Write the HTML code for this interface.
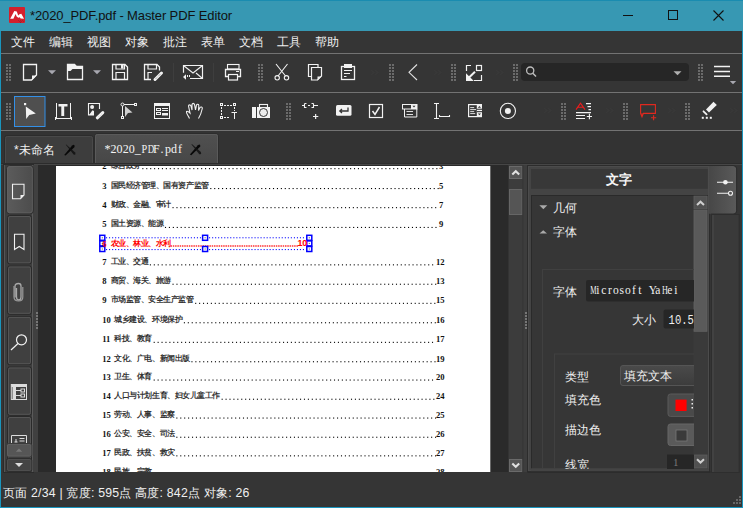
<!DOCTYPE html>
<html><head><meta charset="utf-8">
<style>
*{margin:0;padding:0;box-sizing:border-box}
html,body{width:743px;height:508px;overflow:hidden;background:#353535;font-family:"Liberation Sans",sans-serif;color:#e8e8e8}
.a{position:absolute;white-space:nowrap}
.hl{height:1px;background:#737373}
.menu span{position:absolute;top:34px;font-size:12px;color:#f0f0f0}
</style></head><body>
<div class="a" style="left:0;top:0;width:743px;height:508px;background:#353535;border-left:1px solid #1a95bd;border-right:1px solid #1a95bd;border-bottom:1px solid #1a95bd"></div>
<div class="a" style="left:0;top:0;width:743px;height:31px;background:#3798b3;border-top:1px solid #1a8cb0"></div>
<div class="a" style="left:30px;top:8px;font-size:13px;letter-spacing:-0.12px;color:#111">*2020_PDF.pdf - Master PDF Editor</div>
<div class="menu">
<span style="left:11px">文件</span><span style="left:49px">编辑</span><span style="left:87px">视图</span><span style="left:125px">对象</span><span style="left:163px">批注</span><span style="left:201px">表单</span><span style="left:239px">文档</span><span style="left:277px">工具</span><span style="left:315px">帮助</span>
</div>
<div class="a hl" style="left:1px;top:53px;width:741px"></div>
<div class="a hl" style="left:1px;top:92px;width:741px"></div>
<div class="a hl" style="left:1px;top:130px;width:741px"></div>

<svg class="a" style="left:0;top:0" width="743" height="508" viewBox="0 0 743 508">
<rect x="9" y="7" width="16" height="16" rx="1" fill="#d4202c"/>
<path d="M10.2 18.7L14.3 11.1L16.8 11.4L18.2 15.6L19.5 14.2L21.3 13.8L24 18.7L20.6 18.6L19.8 17.2L18.3 17.8L16.6 16.6L15.6 14L13.4 18.7Z" fill="#fff"/><path d="M18.5 20.5l1 1M20.5 20.5l1 1M22.5 20.5l1 1M20 22l1 .5" stroke="#7a1a30" stroke-width="0.8"/>
<rect x="623" y="15" width="10" height="1" fill="#111"/>
<rect x="668.5" y="10.5" width="9" height="9" fill="none" stroke="#111" stroke-width="1"/>
<path d="M713.5 10.5L723.5 20.5M723.5 10.5L713.5 20.5" stroke="#111" stroke-width="1.1"/>
<rect x="6" y="64" width="2" height="2" fill="#6b6b6b"/><rect x="9" y="64" width="2" height="2" fill="#6b6b6b"/><rect x="6" y="67" width="2" height="2" fill="#6b6b6b"/><rect x="9" y="67" width="2" height="2" fill="#6b6b6b"/><rect x="6" y="70" width="2" height="2" fill="#6b6b6b"/><rect x="9" y="70" width="2" height="2" fill="#6b6b6b"/><rect x="6" y="73" width="2" height="2" fill="#6b6b6b"/><rect x="9" y="73" width="2" height="2" fill="#6b6b6b"/><rect x="6" y="76" width="2" height="2" fill="#6b6b6b"/><rect x="9" y="76" width="2" height="2" fill="#6b6b6b"/><rect x="6" y="79" width="2" height="2" fill="#6b6b6b"/><rect x="9" y="79" width="2" height="2" fill="#6b6b6b"/>
<path d="M23.5 64.5H36.5V75L31.5 80H23.5Z" fill="none" stroke="#f2f2f2" stroke-width="1.3"/>
<path d="M32 75.5H36.5L32 80Z" fill="#f2f2f2"/>
<path d="M48 70.3H56L52 74.3Z" fill="#a8a8b0"/>
<path d="M67.5 64.5H74.5L76.5 66.5H82.5V79.5H67.5Z" fill="none" stroke="#f2f2f2" stroke-width="1.3"/>
<path d="M67.5 64.5H74.5L76.5 66.5H82.5V69H72.5L70.5 71H67.5Z" fill="#f2f2f2"/>
<path d="M93 70.3H101L97 74.3Z" fill="#a8a8b0"/>
<path d="M112.5 64.5H125L127.5 67V79.5H112.5Z" fill="none" stroke="#f2f2f2" stroke-width="1.3"/>
<path d="M116 64.5V69H124.5V64.5M116 79.5V72.5H124.5V79.5" fill="none" stroke="#f2f2f2" stroke-width="1.2"/>
<rect x="121" y="65" width="2.5" height="3.5" fill="#f2f2f2"/>
<path d="M151 79.5H144.5V64.5H157L159.5 67V70.5" fill="none" stroke="#f2f2f2" stroke-width="1.3"/>
<path d="M148 64.5V69H156.5V64.5M148 79.5V72.5H152" fill="none" stroke="#f2f2f2" stroke-width="1.2"/>
<rect x="152.5" y="67" width="3" height="3" fill="none"/>
<path d="M155 79.5L161.5 73" stroke="#f2f2f2" stroke-width="3" stroke-linecap="round"/>
<path d="M155.6 78.9L160.9 73.6" stroke="#888" stroke-width="1" stroke-dasharray="1 1"/>
<rect x="173" y="63" width="1" height="19" fill="#3e3e3e"/>
<rect x="213" y="63" width="1" height="19" fill="#3e3e3e"/>
<path d="M183.5 72.7V65.5H202.5V78.5H190" fill="none" stroke="#f2f2f2" stroke-width="1.2"/>
<path d="M183.5 65.5L193 73L202.5 65.5M202.5 78.5L196 73" fill="none" stroke="#f2f2f2" stroke-width="1.1"/>
<path d="M183 77L186 74.2V79.8Z" fill="#f2f2f2"/><rect x="187" y="75" width="1" height="2" fill="#f2f2f2"/><rect x="189" y="75" width="1" height="2" fill="#f2f2f2"/>
<rect x="227.5" y="64.5" width="11.5" height="4.5" fill="none" stroke="#f2f2f2" stroke-width="1.1"/>
<path d="M228.5 76.5H225.5V69.5H240.5V76.5H237.5" fill="none" stroke="#f2f2f2" stroke-width="1.3"/>
<rect x="228.5" y="74.5" width="9" height="5.5" fill="none" stroke="#f2f2f2" stroke-width="1.2"/>
<rect x="236" y="71" width="3" height="1" fill="#f2f2f2"/>
<rect x="258" y="64" width="2" height="2" fill="#6b6b6b"/><rect x="261" y="64" width="2" height="2" fill="#6b6b6b"/><rect x="258" y="67" width="2" height="2" fill="#6b6b6b"/><rect x="261" y="67" width="2" height="2" fill="#6b6b6b"/><rect x="258" y="70" width="2" height="2" fill="#6b6b6b"/><rect x="261" y="70" width="2" height="2" fill="#6b6b6b"/><rect x="258" y="73" width="2" height="2" fill="#6b6b6b"/><rect x="261" y="73" width="2" height="2" fill="#6b6b6b"/><rect x="258" y="76" width="2" height="2" fill="#6b6b6b"/><rect x="261" y="76" width="2" height="2" fill="#6b6b6b"/><rect x="258" y="79" width="2" height="2" fill="#6b6b6b"/><rect x="261" y="79" width="2" height="2" fill="#6b6b6b"/>
<path d="M276 64L285.5 76M287.5 64L278 76" stroke="#f2f2f2" stroke-width="1.1"/>
<circle cx="277.2" cy="77.8" r="2.2" fill="none" stroke="#f2f2f2" stroke-width="1.1"/><circle cx="286.5" cy="77.8" r="2.2" fill="none" stroke="#f2f2f2" stroke-width="1.1"/>
<path d="M311 76.5H308.5V64.5H318V67" fill="none" stroke="#f2f2f2" stroke-width="1.2"/>
<path d="M311.5 67.5H321.5V76L317.5 80H311.5Z" fill="none" stroke="#f2f2f2" stroke-width="1.2"/>
<path d="M317.5 76.5H321.5L317.5 80.5Z" fill="#f2f2f2"/>
<rect x="341.5" y="66.5" width="13" height="13" fill="none" stroke="#f2f2f2" stroke-width="1.3"/>
<rect x="344" y="64" width="8" height="4" fill="#f2f2f2"/>
<path d="M344 70.5H352M344 73.5H350M344 76.5H346.5" stroke="#f2f2f2" stroke-width="1"/>
<path d="M371 70l3 2.5l-3 2.5M375 70l3 2.5l-3 2.5" stroke="#393939" stroke-width="1.2" fill="none"/>
<rect x="389" y="64" width="2" height="2" fill="#6b6b6b"/><rect x="392" y="64" width="2" height="2" fill="#6b6b6b"/><rect x="389" y="67" width="2" height="2" fill="#6b6b6b"/><rect x="392" y="67" width="2" height="2" fill="#6b6b6b"/><rect x="389" y="70" width="2" height="2" fill="#6b6b6b"/><rect x="392" y="70" width="2" height="2" fill="#6b6b6b"/><rect x="389" y="73" width="2" height="2" fill="#6b6b6b"/><rect x="392" y="73" width="2" height="2" fill="#6b6b6b"/><rect x="389" y="76" width="2" height="2" fill="#6b6b6b"/><rect x="392" y="76" width="2" height="2" fill="#6b6b6b"/><rect x="389" y="79" width="2" height="2" fill="#6b6b6b"/><rect x="392" y="79" width="2" height="2" fill="#6b6b6b"/>
<path d="M417 64.5L409 72.3L417 80" fill="none" stroke="#e0e0e0" stroke-width="1.1"/>
<path d="M434 70l3 2.5l-3 2.5M438 70l3 2.5l-3 2.5" stroke="#393939" stroke-width="1.2" fill="none"/>
<rect x="451" y="64" width="2" height="2" fill="#6b6b6b"/><rect x="454" y="64" width="2" height="2" fill="#6b6b6b"/><rect x="451" y="67" width="2" height="2" fill="#6b6b6b"/><rect x="454" y="67" width="2" height="2" fill="#6b6b6b"/><rect x="451" y="70" width="2" height="2" fill="#6b6b6b"/><rect x="454" y="70" width="2" height="2" fill="#6b6b6b"/><rect x="451" y="73" width="2" height="2" fill="#6b6b6b"/><rect x="454" y="73" width="2" height="2" fill="#6b6b6b"/><rect x="451" y="76" width="2" height="2" fill="#6b6b6b"/><rect x="454" y="76" width="2" height="2" fill="#6b6b6b"/><rect x="451" y="79" width="2" height="2" fill="#6b6b6b"/><rect x="454" y="79" width="2" height="2" fill="#6b6b6b"/>
<path d="M466.5 71V65.5H471M481.5 75V80.5H474" fill="none" stroke="#f2f2f2" stroke-width="1.2"/>
<rect x="476.5" y="65.5" width="5" height="5" fill="none" stroke="#f2f2f2" stroke-width="1.2"/>
<path d="M466 73.2L466 81L473.8 81Z" fill="#f2f2f2"/><path d="M468.5 78L475 71.8" stroke="#f2f2f2" stroke-width="2"/>
<path d="M496 70l3 2.5l-3 2.5M500 70l3 2.5l-3 2.5" stroke="#393939" stroke-width="1.2" fill="none"/>
<rect x="513" y="64" width="2" height="2" fill="#6b6b6b"/><rect x="516" y="64" width="2" height="2" fill="#6b6b6b"/><rect x="513" y="67" width="2" height="2" fill="#6b6b6b"/><rect x="516" y="67" width="2" height="2" fill="#6b6b6b"/><rect x="513" y="70" width="2" height="2" fill="#6b6b6b"/><rect x="516" y="70" width="2" height="2" fill="#6b6b6b"/><rect x="513" y="73" width="2" height="2" fill="#6b6b6b"/><rect x="516" y="73" width="2" height="2" fill="#6b6b6b"/><rect x="513" y="76" width="2" height="2" fill="#6b6b6b"/><rect x="516" y="76" width="2" height="2" fill="#6b6b6b"/><rect x="513" y="79" width="2" height="2" fill="#6b6b6b"/><rect x="516" y="79" width="2" height="2" fill="#6b6b6b"/>
<rect x="521" y="63" width="168" height="18" rx="4" fill="#262626"/>
<circle cx="530.2" cy="70.6" r="3.6" fill="none" stroke="#bdbdbd" stroke-width="1.3"/><path d="M532.8 73.2L536 76.5" stroke="#bdbdbd" stroke-width="1.5"/>
<path d="M673.5 71.2H681.5L677.5 75.3Z" fill="#b0b0b0"/>
<rect x="698" y="64" width="2" height="2" fill="#6b6b6b"/><rect x="701" y="64" width="2" height="2" fill="#6b6b6b"/><rect x="698" y="67" width="2" height="2" fill="#6b6b6b"/><rect x="701" y="67" width="2" height="2" fill="#6b6b6b"/><rect x="698" y="70" width="2" height="2" fill="#6b6b6b"/><rect x="701" y="70" width="2" height="2" fill="#6b6b6b"/><rect x="698" y="73" width="2" height="2" fill="#6b6b6b"/><rect x="701" y="73" width="2" height="2" fill="#6b6b6b"/><rect x="698" y="76" width="2" height="2" fill="#6b6b6b"/><rect x="701" y="76" width="2" height="2" fill="#6b6b6b"/><rect x="698" y="79" width="2" height="2" fill="#6b6b6b"/><rect x="701" y="79" width="2" height="2" fill="#6b6b6b"/>
<path d="M714 66.5H730M714 71.5H730M714 76.3H730" stroke="#f2f2f2" stroke-width="1.4"/>
<path d="M729.8 81H736.2L733 84.3Z" fill="#a8a8b0"/>
<rect x="6" y="103" width="2" height="2" fill="#6b6b6b"/><rect x="9" y="103" width="2" height="2" fill="#6b6b6b"/><rect x="6" y="106" width="2" height="2" fill="#6b6b6b"/><rect x="9" y="106" width="2" height="2" fill="#6b6b6b"/><rect x="6" y="109" width="2" height="2" fill="#6b6b6b"/><rect x="9" y="109" width="2" height="2" fill="#6b6b6b"/><rect x="6" y="112" width="2" height="2" fill="#6b6b6b"/><rect x="9" y="112" width="2" height="2" fill="#6b6b6b"/><rect x="6" y="115" width="2" height="2" fill="#6b6b6b"/><rect x="9" y="115" width="2" height="2" fill="#6b6b6b"/><rect x="6" y="118" width="2" height="2" fill="#6b6b6b"/><rect x="9" y="118" width="2" height="2" fill="#6b6b6b"/>
<rect x="14.5" y="96.5" width="30.5" height="30" fill="#4f4f4f" stroke="#3390e8" stroke-width="1"/>
<rect x="24" y="103" width="2.2" height="2.2" fill="#f2f2f2"/>
<path d="M25.8 106.5L35.8 113.5L29.2 115L26.2 119Z" fill="#f2f2f2"/>
<path d="M56.5 103V119M70.5 103V119M55 118.5H72" stroke="#f2f2f2" stroke-width="1"/><path d="M55.5 117V120M71.5 117V120" stroke="#f2f2f2" stroke-width="1"/>
<path d="M58.5 104H67.5V106.5H64.2V116H61.3V106.5H58.5Z" fill="#f2f2f2"/>
<path d="M99.5 109V103.5H88.5V115H94" fill="none" stroke="#f2f2f2" stroke-width="1.1"/>
<circle cx="92.1" cy="106.9" r="2" fill="#f2f2f2"/><path d="M89 115L92.5 110.3L94 111V115Z" fill="#f2f2f2"/>
<path d="M97.3 117.8L102.8 112.6" stroke="#f2f2f2" stroke-width="3" stroke-linecap="round"/>
<path d="M98.4 116.2l.8.8M99.8 114.9l.8.8M101.2 113.6l.8.8" stroke="#bbb" stroke-width="0.6"/>
<path d="M122.5 104.5H135.5M122.5 104.5V117.5" stroke="#f2f2f2" stroke-width="1"/>
<circle cx="122.5" cy="104.5" r="1.5" fill="#353535" stroke="#f2f2f2" stroke-width="1"/>
<rect x="134.5" y="103.5" width="2" height="2" fill="#353535" stroke="#f2f2f2" stroke-width="1"/>
<rect x="121.5" y="116.5" width="2" height="2" fill="#353535" stroke="#f2f2f2" stroke-width="1"/>
<path d="M125 106L132.5 112.5L128 113L125 117Z" fill="#d0d0d0"/>
<rect x="154.5" y="103.5" width="15" height="15" fill="none" stroke="#f2f2f2" stroke-width="1"/>
<rect x="154" y="103" width="16" height="3" fill="#f2f2f2"/>
<rect x="156.5" y="108.5" width="4" height="2" fill="none" stroke="#f2f2f2" stroke-width="1"/><rect x="156.5" y="112.5" width="4" height="2" fill="none" stroke="#f2f2f2" stroke-width="1"/>
<path d="M162 108.5H168M162 110.5H168M162 113.5H168" stroke="#f2f2f2" stroke-width="1"/><rect x="162" y="114" width="6" height="1.5" fill="#f2f2f2"/>
<path d="M189.5 118.5C188 115 186 113.5 186.5 111.5C187.5 110.5 189 112 190 113L188.5 106C188.5 104.5 190.5 104.5 191 106L192 110L192 104.5C192.5 103 194 103 194.5 104.5L195.5 110L196.5 105C197 103.8 198.8 104 198.8 105.5L198.5 110.5L200 107.5C200.8 106.5 202.5 107 202.3 108.5C201.5 112 200.5 115.5 198.5 118.5" fill="none" stroke="#f2f2f2" stroke-width="1.1"/>
<rect x="220.5" y="103.5" width="2" height="2" fill="none" stroke="#f2f2f2" stroke-width="1"/><rect x="233.5" y="103.5" width="2" height="2" fill="none" stroke="#f2f2f2" stroke-width="1"/><rect x="220.5" y="116.5" width="2" height="2" fill="none" stroke="#f2f2f2" stroke-width="1"/>
<path d="M224 105.5H233M221.5 107V116M224 117.5H229M234.5 107V111" stroke="#f2f2f2" stroke-width="1" stroke-dasharray="2 1"/>
<path d="M231.5 112.5H237M234.5 112.5V119" stroke="#f2f2f2" stroke-width="1"/>
<rect x="252" y="107" width="4" height="11" fill="#f2f2f2"/><rect x="257" y="107" width="13" height="11" fill="#f2f2f2"/>
<rect x="259.5" y="104.5" width="8" height="3" fill="none" stroke="#f2f2f2" stroke-width="1.1"/>
<circle cx="263.5" cy="112.5" r="4" fill="#ececec" stroke="#353535" stroke-width="1"/>
<rect x="286" y="103" width="2" height="2" fill="#6b6b6b"/><rect x="289" y="103" width="2" height="2" fill="#6b6b6b"/><rect x="286" y="106" width="2" height="2" fill="#6b6b6b"/><rect x="289" y="106" width="2" height="2" fill="#6b6b6b"/><rect x="286" y="109" width="2" height="2" fill="#6b6b6b"/><rect x="289" y="109" width="2" height="2" fill="#6b6b6b"/><rect x="286" y="112" width="2" height="2" fill="#6b6b6b"/><rect x="289" y="112" width="2" height="2" fill="#6b6b6b"/><rect x="286" y="115" width="2" height="2" fill="#6b6b6b"/><rect x="289" y="115" width="2" height="2" fill="#6b6b6b"/><rect x="286" y="118" width="2" height="2" fill="#6b6b6b"/><rect x="289" y="118" width="2" height="2" fill="#6b6b6b"/>
<path d="M302 105.5H304.5M304.5 103.5V107.5H306.5M304.5 103.5H306.5M308 105.5H310M313.5 103.5V107.5H311.5M313.5 103.5H311.5M313.5 105.5H318" fill="none" stroke="#f2f2f2" stroke-width="1.1"/>
<path d="M313 116.5H318.3M315.65 114V119" stroke="#f2f2f2" stroke-width="1.2"/>
<rect x="336" y="105" width="15.5" height="10.8" rx="1.5" fill="#f2f2f2"/>
<path d="M348 107.5V111H340M342 109L339.8 111L342 113" fill="none" stroke="#353535" stroke-width="1.3"/>
<rect x="369.5" y="104.5" width="13" height="13" fill="none" stroke="#f2f2f2" stroke-width="1.2"/>
<path d="M372.5 111L375 114.5L379.5 107" fill="none" stroke="#f2f2f2" stroke-width="1.5"/>
<rect x="402.5" y="104.5" width="14.5" height="4.5" fill="none" stroke="#f2f2f2" stroke-width="1"/><rect x="411" y="104.5" width="6" height="4.5" fill="#f2f2f2"/>
<path d="M412.5 105.8H415.5L414 107.5Z" fill="#353535"/>
<path d="M404.5 109V117H416.8V109" fill="none" stroke="#f2f2f2" stroke-width="1"/><path d="M406.5 111.5H413M406.5 114.5H413" stroke="#f2f2f2" stroke-width="0.9"/>
<path d="M436.5 103.5V118.5M434 103.5H439M434 118.5H439" stroke="#f2f2f2" stroke-width="1.1"/>
<path d="M439.5 115V116.5H449.5V115" fill="none" stroke="#f2f2f2" stroke-width="1.1"/>
<rect x="468" y="104" width="14" height="13.2" fill="#f2f2f2"/><rect x="469.2" y="105.2" width="7.6" height="10.8" fill="#353535"/>
<path d="M470.2 107.6H474.2M470.2 109.6H476M470.2 111.6H474.2M470.2 113.6H475.2" stroke="#f2f2f2" stroke-width="0.9"/>
<rect x="476.8" y="108.7" width="5.2" height="1.1" fill="#353535"/><rect x="476.8" y="111.1" width="5.2" height="1.1" fill="#353535"/>
<path d="M477.8 107.8H481L479.4 105.9Z M477.8 113.4H481L479.4 115.3Z" fill="#353535"/>
<circle cx="507.9" cy="110.9" r="7.6" fill="none" stroke="#f2f2f2" stroke-width="1.1"/><circle cx="507.9" cy="110.9" r="3" fill="#f2f2f2"/>
<path d="M544 108l3 2.5l-3 2.5M548 108l3 2.5l-3 2.5" stroke="#393939" stroke-width="1.2" fill="none"/>
<rect x="561" y="103" width="2" height="2" fill="#6b6b6b"/><rect x="564" y="103" width="2" height="2" fill="#6b6b6b"/><rect x="561" y="106" width="2" height="2" fill="#6b6b6b"/><rect x="564" y="106" width="2" height="2" fill="#6b6b6b"/><rect x="561" y="109" width="2" height="2" fill="#6b6b6b"/><rect x="564" y="109" width="2" height="2" fill="#6b6b6b"/><rect x="561" y="112" width="2" height="2" fill="#6b6b6b"/><rect x="564" y="112" width="2" height="2" fill="#6b6b6b"/><rect x="561" y="115" width="2" height="2" fill="#6b6b6b"/><rect x="564" y="115" width="2" height="2" fill="#6b6b6b"/><rect x="561" y="118" width="2" height="2" fill="#6b6b6b"/><rect x="564" y="118" width="2" height="2" fill="#6b6b6b"/>
<path d="M576 109.6L580.5 103.2L585 109.6M577.6 107.3H583.4" fill="none" stroke="#ee1c1c" stroke-width="1.1"/>
<path d="M586 103.6H591M587.5 106.6H591M588.5 109.6H591M576 112.6H591M576 115.5H585M576 118.5H585M586.8 116.5H592M589.4 113.8V119.2" stroke="#f2f2f2" stroke-width="1.1"/>
<path d="M606 108l3 2.5l-3 2.5M610 108l3 2.5l-3 2.5" stroke="#393939" stroke-width="1.2" fill="none"/>
<rect x="623" y="103" width="2" height="2" fill="#6b6b6b"/><rect x="626" y="103" width="2" height="2" fill="#6b6b6b"/><rect x="623" y="106" width="2" height="2" fill="#6b6b6b"/><rect x="626" y="106" width="2" height="2" fill="#6b6b6b"/><rect x="623" y="109" width="2" height="2" fill="#6b6b6b"/><rect x="626" y="109" width="2" height="2" fill="#6b6b6b"/><rect x="623" y="112" width="2" height="2" fill="#6b6b6b"/><rect x="626" y="112" width="2" height="2" fill="#6b6b6b"/><rect x="623" y="115" width="2" height="2" fill="#6b6b6b"/><rect x="626" y="115" width="2" height="2" fill="#6b6b6b"/><rect x="623" y="118" width="2" height="2" fill="#6b6b6b"/><rect x="626" y="118" width="2" height="2" fill="#6b6b6b"/>
<path d="M640.6 104.6H655.4V113.4H643.4L642 116.8L640.6 113.4Z" fill="none" stroke="#e0291f" stroke-width="1.1"/><path d="M641 113.5L642 116.5L643 113.5Z" fill="#e0291f"/>
<path d="M651 117.8H656.2M653.6 115.3V120.2" stroke="#e0291f" stroke-width="1.1"/>
<path d="M668 108l3 2.5l-3 2.5M672 108l3 2.5l-3 2.5" stroke="#393939" stroke-width="1.2" fill="none"/>
<rect x="685" y="103" width="2" height="2" fill="#6b6b6b"/><rect x="688" y="103" width="2" height="2" fill="#6b6b6b"/><rect x="685" y="106" width="2" height="2" fill="#6b6b6b"/><rect x="688" y="106" width="2" height="2" fill="#6b6b6b"/><rect x="685" y="109" width="2" height="2" fill="#6b6b6b"/><rect x="688" y="109" width="2" height="2" fill="#6b6b6b"/><rect x="685" y="112" width="2" height="2" fill="#6b6b6b"/><rect x="688" y="112" width="2" height="2" fill="#6b6b6b"/><rect x="685" y="115" width="2" height="2" fill="#6b6b6b"/><rect x="688" y="115" width="2" height="2" fill="#6b6b6b"/><rect x="685" y="118" width="2" height="2" fill="#6b6b6b"/><rect x="688" y="118" width="2" height="2" fill="#6b6b6b"/>
<path d="M706 109.5L713.5 101.8L716.8 105L709 112.5Z" fill="#f2f2f2"/>
<path d="M703.5 111.3L706.6 114.4" stroke="#f2f2f2" stroke-width="1.8" stroke-linecap="round"/>
<rect x="701.8" y="116.8" width="2" height="2" fill="#f2f2f2"/><rect x="705.8" y="116.8" width="2" height="2" fill="#f2f2f2"/><rect x="709.8" y="116.8" width="2" height="2" fill="#f2f2f2"/>
<path d="M730 108l3 2.5l-3 2.5M734 108l3 2.5l-3 2.5" stroke="#393939" stroke-width="1.2" fill="none"/>
<rect x="1" y="131" width="741" height="33" fill="#333333"/>
<path d="M4.5 164V138Q4.5 135.5 7 135.5H91Q93.5 135.5 93.5 138V164" fill="#3d3d3d" stroke="#2c2c2c" stroke-width="1"/>
<path d="M5.5 164V138.5Q5.5 136.5 7.5 136.5H90.5Q92.5 136.5 92.5 138.5V164" fill="none" stroke="#494949" stroke-width="1"/>
<defs><linearGradient id="tg2" x1="0" y1="0" x2="0" y2="1"><stop offset="0" stop-color="#505050"/><stop offset="1" stop-color="#474747"/></linearGradient><linearGradient id="sbh" x1="0" y1="0" x2="1" y2="0"><stop offset="0" stop-color="#5c5c5c"/><stop offset="1" stop-color="#4c4c4c"/></linearGradient><linearGradient id="vt" x1="0" y1="0" x2="1" y2="0"><stop offset="0" stop-color="#474747"/><stop offset="1" stop-color="#5a5a5a"/></linearGradient><linearGradient id="cb" x1="0" y1="0" x2="0" y2="1"><stop offset="0" stop-color="#4a4a4a"/><stop offset="1" stop-color="#3c3c3c"/></linearGradient></defs>
<path d="M94.5 164V136Q94.5 133.5 97 133.5H216Q218.5 133.5 218.5 136V164" fill="url(#tg2)" stroke="#2c2c2c" stroke-width="1"/>
<path d="M95.5 164V136.5Q95.5 134.5 97.5 134.5H215.5Q217.5 134.5 217.5 136.5V164" fill="none" stroke="#5a5a5a" stroke-width="1"/>
<path d="M64.2 155L72.2 145.6Q74.8 143.6 74.60000000000001 147L65.60000000000001 155.6Z" fill="#080808"/><path d="M66.2 144.4L75.2 152.4Q76.4 155.4 73.60000000000001 154.6L65.8 144.8Z" fill="#111" opacity="0.85"/>
<path d="M189.9 154.6L197.9 145.2Q200.5 143.2 200.3 146.6L191.3 155.2Z" fill="#080808"/><path d="M191.9 144.0L200.9 152.0Q202.1 155.0 199.3 154.2L191.5 144.4Z" fill="#111" opacity="0.85"/>
<rect x="1" y="163" width="741" height="1" fill="#2c2c2c"/><rect x="1" y="164" width="741" height="1" fill="#464646"/>
<rect x="1" y="165" width="741" height="308" fill="#353535"/>
<rect x="3.5" y="164.5" width="30" height="308" fill="#3d3d3d" stroke="#2b2b2b"/><rect x="4" y="165" width="1" height="307" fill="#555"/>
<rect x="32" y="165" width="1" height="307" fill="#5a5a5a"/>
<rect x="33" y="165" width="5" height="307" fill="#404040"/>
<rect x="36" y="312" width="2" height="2" fill="#767676"/>
<rect x="36" y="315" width="2" height="2" fill="#767676"/>
<rect x="36" y="318" width="2" height="2" fill="#767676"/>
<rect x="36" y="321" width="2" height="2" fill="#767676"/>
<rect x="36" y="324" width="2" height="2" fill="#767676"/>
<rect x="36" y="327" width="2" height="2" fill="#767676"/>
<rect x="6.5" y="165.5" width="26.8" height="48.3" rx="3" fill="url(#sbh)" stroke="#2e2e2e"/>
<rect x="7.5" y="166.5" width="24.8" height="46.3" rx="2.5" fill="none" stroke="#626262" stroke-width="0.8"/>
<rect x="7.5" y="215.5" width="24" height="48.3" rx="2" fill="#404040" stroke="#2a2a2a"/>
<rect x="8.5" y="216.5" width="22" height="46.3" rx="1.5" fill="none" stroke="#555555" stroke-width="1"/>
<rect x="7.5" y="266" width="24" height="48.3" rx="2" fill="#404040" stroke="#2a2a2a"/>
<rect x="8.5" y="267" width="22" height="46.3" rx="1.5" fill="none" stroke="#555555" stroke-width="1"/>
<rect x="7.5" y="316.4" width="24" height="48.3" rx="2" fill="#404040" stroke="#2a2a2a"/>
<rect x="8.5" y="317.4" width="22" height="46.3" rx="1.5" fill="none" stroke="#555555" stroke-width="1"/>
<rect x="7.5" y="367" width="24" height="48.3" rx="2" fill="#404040" stroke="#2a2a2a"/>
<rect x="8.5" y="368" width="22" height="46.3" rx="1.5" fill="none" stroke="#555555" stroke-width="1"/>
<rect x="7.5" y="416.5" width="24" height="48.3" rx="2" fill="#404040" stroke="#2a2a2a"/>
<rect x="8.5" y="417.5" width="22" height="46.3" rx="1.5" fill="none" stroke="#555555" stroke-width="1"/>
<path d="M12.5 184.2H24V195L20.5 198.8H12.5Z" fill="none" stroke="#f2f2f2" stroke-width="1.1"/><path d="M20.5 195H24L20.5 198.8Z" fill="#f2f2f2"/>
<path d="M14.5 234.2H24V249.5L19.25 246.5L14.5 249.5Z" fill="none" stroke="#f2f2f2" stroke-width="1.1"/>
<path d="M16.5 288V297Q16.5 300 18.7 300Q21 300 21 297V286Q21 283.5 18.5 283.5Q15 283.5 15 286.5V297.5" fill="none" stroke="#a8a8a8" stroke-width="1.3"/><path d="M22.8 287V297Q22.8 301 18.7 301Q14 301 14 297V286" fill="none" stroke="#9a9a9a" stroke-width="1.2"/>
<circle cx="21.5" cy="339.8" r="5" fill="none" stroke="#f2f2f2" stroke-width="1.2"/><path d="M18 343.5L11 350" stroke="#f2f2f2" stroke-width="1.2"/>
<rect x="11.3" y="384.5" width="15.2" height="15" fill="none" stroke="#dcdcdc" stroke-width="1"/><rect x="11.3" y="384.5" width="15.2" height="2.5" fill="#dcdcdc"/><rect x="12.5" y="387" width="3.5" height="12" fill="#dcdcdc"/><path d="M16 390.5H21M16 395.5H21" stroke="#dcdcdc"/><rect x="21" y="389" width="3.5" height="3" fill="none" stroke="#dcdcdc" stroke-width="1"/><rect x="21" y="394" width="3.5" height="3" fill="none" stroke="#dcdcdc" stroke-width="1"/>
<path d="M11.5 443V435.5H26.5V443" fill="none" stroke="#dcdcdc" stroke-width="1"/><path d="M16 442V439M14.5 442H17.5M19.5 438.5H24.5M19.5 441H24.5" stroke="#dcdcdc" stroke-width="1"/>
<rect x="6.5" y="443.5" width="25.3" height="13.5" rx="2" fill="#565656" stroke="#3a3a3a"/><rect x="7.5" y="444.5" width="23.3" height="11.5" rx="1.5" fill="none" stroke="#626262" stroke-width="0.8"/>
<path d="M15.8 451.7H22.2L19 448.5Z" fill="#777"/>
<rect x="6.5" y="458.5" width="25.3" height="13" rx="2" fill="#444" stroke="#2e2e2e"/><rect x="7.5" y="459.5" width="23.3" height="11" rx="1.5" fill="none" stroke="#505050" stroke-width="0.8"/>
<path d="M15 463H23L19 467Z" fill="#ddd"/>
<rect x="38" y="165" width="470.6" height="307" fill="#2a2a2a"/>
<rect x="56" y="166" width="434.3" height="306" fill="#ffffff"/>
<rect x="508.6" y="165" width="14" height="307" fill="#3c3c3c"/>
<rect x="509.5" y="166.5" width="12.5" height="12" fill="#555" stroke="#6a6a6a" stroke-width="1"/>
<path d="M512.3 174.5L515.75 171.2L519.2 174.5" fill="none" stroke="#e0e0e0" stroke-width="2.1"/>
<rect x="509.5" y="189.5" width="12.5" height="25" fill="#555" stroke="#666" stroke-width="1"/>
<rect x="509.5" y="459.5" width="12.5" height="12" fill="#555" stroke="#6a6a6a" stroke-width="1"/>
<path d="M512.3 463.5L515.75 466.8L519.2 463.5" fill="none" stroke="#e0e0e0" stroke-width="2.1"/>
<rect x="522.6" y="165" width="5" height="307" fill="#3d3d3d"/><rect x="522.6" y="165" width="0.8" height="307" fill="#363636"/>
<rect x="525" y="312" width="2" height="2" fill="#767676"/>
<rect x="525" y="315" width="2" height="2" fill="#767676"/>
<rect x="525" y="318" width="2" height="2" fill="#767676"/>
<rect x="525" y="321" width="2" height="2" fill="#767676"/>
<rect x="525" y="324" width="2" height="2" fill="#767676"/>
<rect x="525" y="327" width="2" height="2" fill="#767676"/>
<rect x="142.30" y="168.10" width="1.1" height="1.1" fill="#000"/>
<rect x="146.22" y="168.10" width="1.1" height="1.1" fill="#000"/>
<rect x="150.14" y="168.10" width="1.1" height="1.1" fill="#000"/>
<rect x="154.06" y="168.10" width="1.1" height="1.1" fill="#000"/>
<rect x="157.98" y="168.10" width="1.1" height="1.1" fill="#000"/>
<rect x="161.90" y="168.10" width="1.1" height="1.1" fill="#000"/>
<rect x="165.82" y="168.10" width="1.1" height="1.1" fill="#000"/>
<rect x="169.74" y="168.10" width="1.1" height="1.1" fill="#000"/>
<rect x="173.66" y="168.10" width="1.1" height="1.1" fill="#000"/>
<rect x="177.58" y="168.10" width="1.1" height="1.1" fill="#000"/>
<rect x="181.50" y="168.10" width="1.1" height="1.1" fill="#000"/>
<rect x="185.42" y="168.10" width="1.1" height="1.1" fill="#000"/>
<rect x="189.34" y="168.10" width="1.1" height="1.1" fill="#000"/>
<rect x="193.26" y="168.10" width="1.1" height="1.1" fill="#000"/>
<rect x="197.18" y="168.10" width="1.1" height="1.1" fill="#000"/>
<rect x="201.10" y="168.10" width="1.1" height="1.1" fill="#000"/>
<rect x="205.02" y="168.10" width="1.1" height="1.1" fill="#000"/>
<rect x="208.94" y="168.10" width="1.1" height="1.1" fill="#000"/>
<rect x="212.86" y="168.10" width="1.1" height="1.1" fill="#000"/>
<rect x="216.78" y="168.10" width="1.1" height="1.1" fill="#000"/>
<rect x="220.70" y="168.10" width="1.1" height="1.1" fill="#000"/>
<rect x="224.62" y="168.10" width="1.1" height="1.1" fill="#000"/>
<rect x="228.54" y="168.10" width="1.1" height="1.1" fill="#000"/>
<rect x="232.46" y="168.10" width="1.1" height="1.1" fill="#000"/>
<rect x="236.38" y="168.10" width="1.1" height="1.1" fill="#000"/>
<rect x="240.30" y="168.10" width="1.1" height="1.1" fill="#000"/>
<rect x="244.22" y="168.10" width="1.1" height="1.1" fill="#000"/>
<rect x="248.14" y="168.10" width="1.1" height="1.1" fill="#000"/>
<rect x="252.06" y="168.10" width="1.1" height="1.1" fill="#000"/>
<rect x="255.98" y="168.10" width="1.1" height="1.1" fill="#000"/>
<rect x="259.90" y="168.10" width="1.1" height="1.1" fill="#000"/>
<rect x="263.82" y="168.10" width="1.1" height="1.1" fill="#000"/>
<rect x="267.74" y="168.10" width="1.1" height="1.1" fill="#000"/>
<rect x="271.66" y="168.10" width="1.1" height="1.1" fill="#000"/>
<rect x="275.58" y="168.10" width="1.1" height="1.1" fill="#000"/>
<rect x="279.50" y="168.10" width="1.1" height="1.1" fill="#000"/>
<rect x="283.42" y="168.10" width="1.1" height="1.1" fill="#000"/>
<rect x="287.34" y="168.10" width="1.1" height="1.1" fill="#000"/>
<rect x="291.26" y="168.10" width="1.1" height="1.1" fill="#000"/>
<rect x="295.18" y="168.10" width="1.1" height="1.1" fill="#000"/>
<rect x="299.10" y="168.10" width="1.1" height="1.1" fill="#000"/>
<rect x="303.02" y="168.10" width="1.1" height="1.1" fill="#000"/>
<rect x="306.94" y="168.10" width="1.1" height="1.1" fill="#000"/>
<rect x="310.86" y="168.10" width="1.1" height="1.1" fill="#000"/>
<rect x="314.78" y="168.10" width="1.1" height="1.1" fill="#000"/>
<rect x="318.70" y="168.10" width="1.1" height="1.1" fill="#000"/>
<rect x="322.62" y="168.10" width="1.1" height="1.1" fill="#000"/>
<rect x="326.54" y="168.10" width="1.1" height="1.1" fill="#000"/>
<rect x="330.46" y="168.10" width="1.1" height="1.1" fill="#000"/>
<rect x="334.38" y="168.10" width="1.1" height="1.1" fill="#000"/>
<rect x="338.30" y="168.10" width="1.1" height="1.1" fill="#000"/>
<rect x="342.22" y="168.10" width="1.1" height="1.1" fill="#000"/>
<rect x="346.14" y="168.10" width="1.1" height="1.1" fill="#000"/>
<rect x="350.06" y="168.10" width="1.1" height="1.1" fill="#000"/>
<rect x="353.98" y="168.10" width="1.1" height="1.1" fill="#000"/>
<rect x="357.90" y="168.10" width="1.1" height="1.1" fill="#000"/>
<rect x="361.82" y="168.10" width="1.1" height="1.1" fill="#000"/>
<rect x="365.74" y="168.10" width="1.1" height="1.1" fill="#000"/>
<rect x="369.66" y="168.10" width="1.1" height="1.1" fill="#000"/>
<rect x="373.58" y="168.10" width="1.1" height="1.1" fill="#000"/>
<rect x="377.50" y="168.10" width="1.1" height="1.1" fill="#000"/>
<rect x="381.42" y="168.10" width="1.1" height="1.1" fill="#000"/>
<rect x="385.34" y="168.10" width="1.1" height="1.1" fill="#000"/>
<rect x="389.26" y="168.10" width="1.1" height="1.1" fill="#000"/>
<rect x="393.18" y="168.10" width="1.1" height="1.1" fill="#000"/>
<rect x="397.10" y="168.10" width="1.1" height="1.1" fill="#000"/>
<rect x="401.02" y="168.10" width="1.1" height="1.1" fill="#000"/>
<rect x="404.94" y="168.10" width="1.1" height="1.1" fill="#000"/>
<rect x="408.86" y="168.10" width="1.1" height="1.1" fill="#000"/>
<rect x="412.78" y="168.10" width="1.1" height="1.1" fill="#000"/>
<rect x="416.70" y="168.10" width="1.1" height="1.1" fill="#000"/>
<rect x="420.62" y="168.10" width="1.1" height="1.1" fill="#000"/>
<rect x="424.54" y="168.10" width="1.1" height="1.1" fill="#000"/>
<rect x="428.46" y="168.10" width="1.1" height="1.1" fill="#000"/>
<rect x="432.38" y="168.10" width="1.1" height="1.1" fill="#000"/>
<rect x="436.30" y="168.10" width="1.1" height="1.1" fill="#000"/>
<rect x="210.25" y="188.00" width="1.1" height="1.1" fill="#000"/>
<rect x="214.17" y="188.00" width="1.1" height="1.1" fill="#000"/>
<rect x="218.09" y="188.00" width="1.1" height="1.1" fill="#000"/>
<rect x="222.01" y="188.00" width="1.1" height="1.1" fill="#000"/>
<rect x="225.93" y="188.00" width="1.1" height="1.1" fill="#000"/>
<rect x="229.85" y="188.00" width="1.1" height="1.1" fill="#000"/>
<rect x="233.77" y="188.00" width="1.1" height="1.1" fill="#000"/>
<rect x="237.69" y="188.00" width="1.1" height="1.1" fill="#000"/>
<rect x="241.61" y="188.00" width="1.1" height="1.1" fill="#000"/>
<rect x="245.53" y="188.00" width="1.1" height="1.1" fill="#000"/>
<rect x="249.45" y="188.00" width="1.1" height="1.1" fill="#000"/>
<rect x="253.37" y="188.00" width="1.1" height="1.1" fill="#000"/>
<rect x="257.29" y="188.00" width="1.1" height="1.1" fill="#000"/>
<rect x="261.21" y="188.00" width="1.1" height="1.1" fill="#000"/>
<rect x="265.13" y="188.00" width="1.1" height="1.1" fill="#000"/>
<rect x="269.05" y="188.00" width="1.1" height="1.1" fill="#000"/>
<rect x="272.97" y="188.00" width="1.1" height="1.1" fill="#000"/>
<rect x="276.89" y="188.00" width="1.1" height="1.1" fill="#000"/>
<rect x="280.81" y="188.00" width="1.1" height="1.1" fill="#000"/>
<rect x="284.73" y="188.00" width="1.1" height="1.1" fill="#000"/>
<rect x="288.65" y="188.00" width="1.1" height="1.1" fill="#000"/>
<rect x="292.57" y="188.00" width="1.1" height="1.1" fill="#000"/>
<rect x="296.49" y="188.00" width="1.1" height="1.1" fill="#000"/>
<rect x="300.41" y="188.00" width="1.1" height="1.1" fill="#000"/>
<rect x="304.33" y="188.00" width="1.1" height="1.1" fill="#000"/>
<rect x="308.25" y="188.00" width="1.1" height="1.1" fill="#000"/>
<rect x="312.17" y="188.00" width="1.1" height="1.1" fill="#000"/>
<rect x="316.09" y="188.00" width="1.1" height="1.1" fill="#000"/>
<rect x="320.01" y="188.00" width="1.1" height="1.1" fill="#000"/>
<rect x="323.93" y="188.00" width="1.1" height="1.1" fill="#000"/>
<rect x="327.85" y="188.00" width="1.1" height="1.1" fill="#000"/>
<rect x="331.77" y="188.00" width="1.1" height="1.1" fill="#000"/>
<rect x="335.69" y="188.00" width="1.1" height="1.1" fill="#000"/>
<rect x="339.61" y="188.00" width="1.1" height="1.1" fill="#000"/>
<rect x="343.53" y="188.00" width="1.1" height="1.1" fill="#000"/>
<rect x="347.45" y="188.00" width="1.1" height="1.1" fill="#000"/>
<rect x="351.37" y="188.00" width="1.1" height="1.1" fill="#000"/>
<rect x="355.29" y="188.00" width="1.1" height="1.1" fill="#000"/>
<rect x="359.21" y="188.00" width="1.1" height="1.1" fill="#000"/>
<rect x="363.13" y="188.00" width="1.1" height="1.1" fill="#000"/>
<rect x="367.05" y="188.00" width="1.1" height="1.1" fill="#000"/>
<rect x="370.97" y="188.00" width="1.1" height="1.1" fill="#000"/>
<rect x="374.89" y="188.00" width="1.1" height="1.1" fill="#000"/>
<rect x="378.81" y="188.00" width="1.1" height="1.1" fill="#000"/>
<rect x="382.73" y="188.00" width="1.1" height="1.1" fill="#000"/>
<rect x="386.65" y="188.00" width="1.1" height="1.1" fill="#000"/>
<rect x="390.57" y="188.00" width="1.1" height="1.1" fill="#000"/>
<rect x="394.49" y="188.00" width="1.1" height="1.1" fill="#000"/>
<rect x="398.41" y="188.00" width="1.1" height="1.1" fill="#000"/>
<rect x="402.33" y="188.00" width="1.1" height="1.1" fill="#000"/>
<rect x="406.25" y="188.00" width="1.1" height="1.1" fill="#000"/>
<rect x="410.17" y="188.00" width="1.1" height="1.1" fill="#000"/>
<rect x="414.09" y="188.00" width="1.1" height="1.1" fill="#000"/>
<rect x="418.01" y="188.00" width="1.1" height="1.1" fill="#000"/>
<rect x="421.93" y="188.00" width="1.1" height="1.1" fill="#000"/>
<rect x="425.85" y="188.00" width="1.1" height="1.1" fill="#000"/>
<rect x="429.77" y="188.00" width="1.1" height="1.1" fill="#000"/>
<rect x="433.69" y="188.00" width="1.1" height="1.1" fill="#000"/>
<rect x="437.61" y="188.00" width="1.1" height="1.1" fill="#000"/>
<rect x="172.50" y="207.10" width="1.1" height="1.1" fill="#000"/>
<rect x="176.42" y="207.10" width="1.1" height="1.1" fill="#000"/>
<rect x="180.34" y="207.10" width="1.1" height="1.1" fill="#000"/>
<rect x="184.26" y="207.10" width="1.1" height="1.1" fill="#000"/>
<rect x="188.18" y="207.10" width="1.1" height="1.1" fill="#000"/>
<rect x="192.10" y="207.10" width="1.1" height="1.1" fill="#000"/>
<rect x="196.02" y="207.10" width="1.1" height="1.1" fill="#000"/>
<rect x="199.94" y="207.10" width="1.1" height="1.1" fill="#000"/>
<rect x="203.86" y="207.10" width="1.1" height="1.1" fill="#000"/>
<rect x="207.78" y="207.10" width="1.1" height="1.1" fill="#000"/>
<rect x="211.70" y="207.10" width="1.1" height="1.1" fill="#000"/>
<rect x="215.62" y="207.10" width="1.1" height="1.1" fill="#000"/>
<rect x="219.54" y="207.10" width="1.1" height="1.1" fill="#000"/>
<rect x="223.46" y="207.10" width="1.1" height="1.1" fill="#000"/>
<rect x="227.38" y="207.10" width="1.1" height="1.1" fill="#000"/>
<rect x="231.30" y="207.10" width="1.1" height="1.1" fill="#000"/>
<rect x="235.22" y="207.10" width="1.1" height="1.1" fill="#000"/>
<rect x="239.14" y="207.10" width="1.1" height="1.1" fill="#000"/>
<rect x="243.06" y="207.10" width="1.1" height="1.1" fill="#000"/>
<rect x="246.98" y="207.10" width="1.1" height="1.1" fill="#000"/>
<rect x="250.90" y="207.10" width="1.1" height="1.1" fill="#000"/>
<rect x="254.82" y="207.10" width="1.1" height="1.1" fill="#000"/>
<rect x="258.74" y="207.10" width="1.1" height="1.1" fill="#000"/>
<rect x="262.66" y="207.10" width="1.1" height="1.1" fill="#000"/>
<rect x="266.58" y="207.10" width="1.1" height="1.1" fill="#000"/>
<rect x="270.50" y="207.10" width="1.1" height="1.1" fill="#000"/>
<rect x="274.42" y="207.10" width="1.1" height="1.1" fill="#000"/>
<rect x="278.34" y="207.10" width="1.1" height="1.1" fill="#000"/>
<rect x="282.26" y="207.10" width="1.1" height="1.1" fill="#000"/>
<rect x="286.18" y="207.10" width="1.1" height="1.1" fill="#000"/>
<rect x="290.10" y="207.10" width="1.1" height="1.1" fill="#000"/>
<rect x="294.02" y="207.10" width="1.1" height="1.1" fill="#000"/>
<rect x="297.94" y="207.10" width="1.1" height="1.1" fill="#000"/>
<rect x="301.86" y="207.10" width="1.1" height="1.1" fill="#000"/>
<rect x="305.78" y="207.10" width="1.1" height="1.1" fill="#000"/>
<rect x="309.70" y="207.10" width="1.1" height="1.1" fill="#000"/>
<rect x="313.62" y="207.10" width="1.1" height="1.1" fill="#000"/>
<rect x="317.54" y="207.10" width="1.1" height="1.1" fill="#000"/>
<rect x="321.46" y="207.10" width="1.1" height="1.1" fill="#000"/>
<rect x="325.38" y="207.10" width="1.1" height="1.1" fill="#000"/>
<rect x="329.30" y="207.10" width="1.1" height="1.1" fill="#000"/>
<rect x="333.22" y="207.10" width="1.1" height="1.1" fill="#000"/>
<rect x="337.14" y="207.10" width="1.1" height="1.1" fill="#000"/>
<rect x="341.06" y="207.10" width="1.1" height="1.1" fill="#000"/>
<rect x="344.98" y="207.10" width="1.1" height="1.1" fill="#000"/>
<rect x="348.90" y="207.10" width="1.1" height="1.1" fill="#000"/>
<rect x="352.82" y="207.10" width="1.1" height="1.1" fill="#000"/>
<rect x="356.74" y="207.10" width="1.1" height="1.1" fill="#000"/>
<rect x="360.66" y="207.10" width="1.1" height="1.1" fill="#000"/>
<rect x="364.58" y="207.10" width="1.1" height="1.1" fill="#000"/>
<rect x="368.50" y="207.10" width="1.1" height="1.1" fill="#000"/>
<rect x="372.42" y="207.10" width="1.1" height="1.1" fill="#000"/>
<rect x="376.34" y="207.10" width="1.1" height="1.1" fill="#000"/>
<rect x="380.26" y="207.10" width="1.1" height="1.1" fill="#000"/>
<rect x="384.18" y="207.10" width="1.1" height="1.1" fill="#000"/>
<rect x="388.10" y="207.10" width="1.1" height="1.1" fill="#000"/>
<rect x="392.02" y="207.10" width="1.1" height="1.1" fill="#000"/>
<rect x="395.94" y="207.10" width="1.1" height="1.1" fill="#000"/>
<rect x="399.86" y="207.10" width="1.1" height="1.1" fill="#000"/>
<rect x="403.78" y="207.10" width="1.1" height="1.1" fill="#000"/>
<rect x="407.70" y="207.10" width="1.1" height="1.1" fill="#000"/>
<rect x="411.62" y="207.10" width="1.1" height="1.1" fill="#000"/>
<rect x="415.54" y="207.10" width="1.1" height="1.1" fill="#000"/>
<rect x="419.46" y="207.10" width="1.1" height="1.1" fill="#000"/>
<rect x="423.38" y="207.10" width="1.1" height="1.1" fill="#000"/>
<rect x="427.30" y="207.10" width="1.1" height="1.1" fill="#000"/>
<rect x="431.22" y="207.10" width="1.1" height="1.1" fill="#000"/>
<rect x="435.14" y="207.10" width="1.1" height="1.1" fill="#000"/>
<rect x="164.95" y="226.90" width="1.1" height="1.1" fill="#000"/>
<rect x="168.87" y="226.90" width="1.1" height="1.1" fill="#000"/>
<rect x="172.79" y="226.90" width="1.1" height="1.1" fill="#000"/>
<rect x="176.71" y="226.90" width="1.1" height="1.1" fill="#000"/>
<rect x="180.63" y="226.90" width="1.1" height="1.1" fill="#000"/>
<rect x="184.55" y="226.90" width="1.1" height="1.1" fill="#000"/>
<rect x="188.47" y="226.90" width="1.1" height="1.1" fill="#000"/>
<rect x="192.39" y="226.90" width="1.1" height="1.1" fill="#000"/>
<rect x="196.31" y="226.90" width="1.1" height="1.1" fill="#000"/>
<rect x="200.23" y="226.90" width="1.1" height="1.1" fill="#000"/>
<rect x="204.15" y="226.90" width="1.1" height="1.1" fill="#000"/>
<rect x="208.07" y="226.90" width="1.1" height="1.1" fill="#000"/>
<rect x="211.99" y="226.90" width="1.1" height="1.1" fill="#000"/>
<rect x="215.91" y="226.90" width="1.1" height="1.1" fill="#000"/>
<rect x="219.83" y="226.90" width="1.1" height="1.1" fill="#000"/>
<rect x="223.75" y="226.90" width="1.1" height="1.1" fill="#000"/>
<rect x="227.67" y="226.90" width="1.1" height="1.1" fill="#000"/>
<rect x="231.59" y="226.90" width="1.1" height="1.1" fill="#000"/>
<rect x="235.51" y="226.90" width="1.1" height="1.1" fill="#000"/>
<rect x="239.43" y="226.90" width="1.1" height="1.1" fill="#000"/>
<rect x="243.35" y="226.90" width="1.1" height="1.1" fill="#000"/>
<rect x="247.27" y="226.90" width="1.1" height="1.1" fill="#000"/>
<rect x="251.19" y="226.90" width="1.1" height="1.1" fill="#000"/>
<rect x="255.11" y="226.90" width="1.1" height="1.1" fill="#000"/>
<rect x="259.03" y="226.90" width="1.1" height="1.1" fill="#000"/>
<rect x="262.95" y="226.90" width="1.1" height="1.1" fill="#000"/>
<rect x="266.87" y="226.90" width="1.1" height="1.1" fill="#000"/>
<rect x="270.79" y="226.90" width="1.1" height="1.1" fill="#000"/>
<rect x="274.71" y="226.90" width="1.1" height="1.1" fill="#000"/>
<rect x="278.63" y="226.90" width="1.1" height="1.1" fill="#000"/>
<rect x="282.55" y="226.90" width="1.1" height="1.1" fill="#000"/>
<rect x="286.47" y="226.90" width="1.1" height="1.1" fill="#000"/>
<rect x="290.39" y="226.90" width="1.1" height="1.1" fill="#000"/>
<rect x="294.31" y="226.90" width="1.1" height="1.1" fill="#000"/>
<rect x="298.23" y="226.90" width="1.1" height="1.1" fill="#000"/>
<rect x="302.15" y="226.90" width="1.1" height="1.1" fill="#000"/>
<rect x="306.07" y="226.90" width="1.1" height="1.1" fill="#000"/>
<rect x="309.99" y="226.90" width="1.1" height="1.1" fill="#000"/>
<rect x="313.91" y="226.90" width="1.1" height="1.1" fill="#000"/>
<rect x="317.83" y="226.90" width="1.1" height="1.1" fill="#000"/>
<rect x="321.75" y="226.90" width="1.1" height="1.1" fill="#000"/>
<rect x="325.67" y="226.90" width="1.1" height="1.1" fill="#000"/>
<rect x="329.59" y="226.90" width="1.1" height="1.1" fill="#000"/>
<rect x="333.51" y="226.90" width="1.1" height="1.1" fill="#000"/>
<rect x="337.43" y="226.90" width="1.1" height="1.1" fill="#000"/>
<rect x="341.35" y="226.90" width="1.1" height="1.1" fill="#000"/>
<rect x="345.27" y="226.90" width="1.1" height="1.1" fill="#000"/>
<rect x="349.19" y="226.90" width="1.1" height="1.1" fill="#000"/>
<rect x="353.11" y="226.90" width="1.1" height="1.1" fill="#000"/>
<rect x="357.03" y="226.90" width="1.1" height="1.1" fill="#000"/>
<rect x="360.95" y="226.90" width="1.1" height="1.1" fill="#000"/>
<rect x="364.87" y="226.90" width="1.1" height="1.1" fill="#000"/>
<rect x="368.79" y="226.90" width="1.1" height="1.1" fill="#000"/>
<rect x="372.71" y="226.90" width="1.1" height="1.1" fill="#000"/>
<rect x="376.63" y="226.90" width="1.1" height="1.1" fill="#000"/>
<rect x="380.55" y="226.90" width="1.1" height="1.1" fill="#000"/>
<rect x="384.47" y="226.90" width="1.1" height="1.1" fill="#000"/>
<rect x="388.39" y="226.90" width="1.1" height="1.1" fill="#000"/>
<rect x="392.31" y="226.90" width="1.1" height="1.1" fill="#000"/>
<rect x="396.23" y="226.90" width="1.1" height="1.1" fill="#000"/>
<rect x="400.15" y="226.90" width="1.1" height="1.1" fill="#000"/>
<rect x="404.07" y="226.90" width="1.1" height="1.1" fill="#000"/>
<rect x="407.99" y="226.90" width="1.1" height="1.1" fill="#000"/>
<rect x="411.91" y="226.90" width="1.1" height="1.1" fill="#000"/>
<rect x="415.83" y="226.90" width="1.1" height="1.1" fill="#000"/>
<rect x="419.75" y="226.90" width="1.1" height="1.1" fill="#000"/>
<rect x="423.67" y="226.90" width="1.1" height="1.1" fill="#000"/>
<rect x="427.59" y="226.90" width="1.1" height="1.1" fill="#000"/>
<rect x="431.51" y="226.90" width="1.1" height="1.1" fill="#000"/>
<rect x="435.43" y="226.90" width="1.1" height="1.1" fill="#000"/>
<rect x="170.50" y="245.40" width="1.5" height="1.2" fill="#ff0000"/>
<rect x="172.79" y="245.40" width="1.5" height="1.2" fill="#ff0000"/>
<rect x="175.08" y="245.40" width="1.5" height="1.2" fill="#ff0000"/>
<rect x="177.37" y="245.40" width="1.5" height="1.2" fill="#ff0000"/>
<rect x="179.66" y="245.40" width="1.5" height="1.2" fill="#ff0000"/>
<rect x="181.95" y="245.40" width="1.5" height="1.2" fill="#ff0000"/>
<rect x="184.24" y="245.40" width="1.5" height="1.2" fill="#ff0000"/>
<rect x="186.53" y="245.40" width="1.5" height="1.2" fill="#ff0000"/>
<rect x="188.82" y="245.40" width="1.5" height="1.2" fill="#ff0000"/>
<rect x="191.11" y="245.40" width="1.5" height="1.2" fill="#ff0000"/>
<rect x="193.40" y="245.40" width="1.5" height="1.2" fill="#ff0000"/>
<rect x="195.69" y="245.40" width="1.5" height="1.2" fill="#ff0000"/>
<rect x="197.98" y="245.40" width="1.5" height="1.2" fill="#ff0000"/>
<rect x="200.27" y="245.40" width="1.5" height="1.2" fill="#ff0000"/>
<rect x="202.56" y="245.40" width="1.5" height="1.2" fill="#ff0000"/>
<rect x="204.85" y="245.40" width="1.5" height="1.2" fill="#ff0000"/>
<rect x="207.14" y="245.40" width="1.5" height="1.2" fill="#ff0000"/>
<rect x="209.43" y="245.40" width="1.5" height="1.2" fill="#ff0000"/>
<rect x="211.72" y="245.40" width="1.5" height="1.2" fill="#ff0000"/>
<rect x="214.01" y="245.40" width="1.5" height="1.2" fill="#ff0000"/>
<rect x="216.30" y="245.40" width="1.5" height="1.2" fill="#ff0000"/>
<rect x="218.59" y="245.40" width="1.5" height="1.2" fill="#ff0000"/>
<rect x="220.88" y="245.40" width="1.5" height="1.2" fill="#ff0000"/>
<rect x="223.17" y="245.40" width="1.5" height="1.2" fill="#ff0000"/>
<rect x="225.46" y="245.40" width="1.5" height="1.2" fill="#ff0000"/>
<rect x="227.75" y="245.40" width="1.5" height="1.2" fill="#ff0000"/>
<rect x="230.04" y="245.40" width="1.5" height="1.2" fill="#ff0000"/>
<rect x="232.33" y="245.40" width="1.5" height="1.2" fill="#ff0000"/>
<rect x="234.62" y="245.40" width="1.5" height="1.2" fill="#ff0000"/>
<rect x="236.91" y="245.40" width="1.5" height="1.2" fill="#ff0000"/>
<rect x="239.20" y="245.40" width="1.5" height="1.2" fill="#ff0000"/>
<rect x="241.49" y="245.40" width="1.5" height="1.2" fill="#ff0000"/>
<rect x="243.78" y="245.40" width="1.5" height="1.2" fill="#ff0000"/>
<rect x="246.07" y="245.40" width="1.5" height="1.2" fill="#ff0000"/>
<rect x="248.36" y="245.40" width="1.5" height="1.2" fill="#ff0000"/>
<rect x="250.65" y="245.40" width="1.5" height="1.2" fill="#ff0000"/>
<rect x="252.94" y="245.40" width="1.5" height="1.2" fill="#ff0000"/>
<rect x="255.23" y="245.40" width="1.5" height="1.2" fill="#ff0000"/>
<rect x="257.52" y="245.40" width="1.5" height="1.2" fill="#ff0000"/>
<rect x="259.81" y="245.40" width="1.5" height="1.2" fill="#ff0000"/>
<rect x="262.10" y="245.40" width="1.5" height="1.2" fill="#ff0000"/>
<rect x="264.39" y="245.40" width="1.5" height="1.2" fill="#ff0000"/>
<rect x="266.68" y="245.40" width="1.5" height="1.2" fill="#ff0000"/>
<rect x="268.97" y="245.40" width="1.5" height="1.2" fill="#ff0000"/>
<rect x="271.26" y="245.40" width="1.5" height="1.2" fill="#ff0000"/>
<rect x="273.55" y="245.40" width="1.5" height="1.2" fill="#ff0000"/>
<rect x="275.84" y="245.40" width="1.5" height="1.2" fill="#ff0000"/>
<rect x="278.13" y="245.40" width="1.5" height="1.2" fill="#ff0000"/>
<rect x="280.42" y="245.40" width="1.5" height="1.2" fill="#ff0000"/>
<rect x="282.71" y="245.40" width="1.5" height="1.2" fill="#ff0000"/>
<rect x="285.00" y="245.40" width="1.5" height="1.2" fill="#ff0000"/>
<rect x="287.29" y="245.40" width="1.5" height="1.2" fill="#ff0000"/>
<rect x="289.58" y="245.40" width="1.5" height="1.2" fill="#ff0000"/>
<rect x="291.87" y="245.40" width="1.5" height="1.2" fill="#ff0000"/>
<rect x="294.16" y="245.40" width="1.5" height="1.2" fill="#ff0000"/>
<rect x="296.45" y="245.40" width="1.5" height="1.2" fill="#ff0000"/>
<rect x="149.85" y="264.30" width="1.1" height="1.1" fill="#000"/>
<rect x="153.77" y="264.30" width="1.1" height="1.1" fill="#000"/>
<rect x="157.69" y="264.30" width="1.1" height="1.1" fill="#000"/>
<rect x="161.61" y="264.30" width="1.1" height="1.1" fill="#000"/>
<rect x="165.53" y="264.30" width="1.1" height="1.1" fill="#000"/>
<rect x="169.45" y="264.30" width="1.1" height="1.1" fill="#000"/>
<rect x="173.37" y="264.30" width="1.1" height="1.1" fill="#000"/>
<rect x="177.29" y="264.30" width="1.1" height="1.1" fill="#000"/>
<rect x="181.21" y="264.30" width="1.1" height="1.1" fill="#000"/>
<rect x="185.13" y="264.30" width="1.1" height="1.1" fill="#000"/>
<rect x="189.05" y="264.30" width="1.1" height="1.1" fill="#000"/>
<rect x="192.97" y="264.30" width="1.1" height="1.1" fill="#000"/>
<rect x="196.89" y="264.30" width="1.1" height="1.1" fill="#000"/>
<rect x="200.81" y="264.30" width="1.1" height="1.1" fill="#000"/>
<rect x="204.73" y="264.30" width="1.1" height="1.1" fill="#000"/>
<rect x="208.65" y="264.30" width="1.1" height="1.1" fill="#000"/>
<rect x="212.57" y="264.30" width="1.1" height="1.1" fill="#000"/>
<rect x="216.49" y="264.30" width="1.1" height="1.1" fill="#000"/>
<rect x="220.41" y="264.30" width="1.1" height="1.1" fill="#000"/>
<rect x="224.33" y="264.30" width="1.1" height="1.1" fill="#000"/>
<rect x="228.25" y="264.30" width="1.1" height="1.1" fill="#000"/>
<rect x="232.17" y="264.30" width="1.1" height="1.1" fill="#000"/>
<rect x="236.09" y="264.30" width="1.1" height="1.1" fill="#000"/>
<rect x="240.01" y="264.30" width="1.1" height="1.1" fill="#000"/>
<rect x="243.93" y="264.30" width="1.1" height="1.1" fill="#000"/>
<rect x="247.85" y="264.30" width="1.1" height="1.1" fill="#000"/>
<rect x="251.77" y="264.30" width="1.1" height="1.1" fill="#000"/>
<rect x="255.69" y="264.30" width="1.1" height="1.1" fill="#000"/>
<rect x="259.61" y="264.30" width="1.1" height="1.1" fill="#000"/>
<rect x="263.53" y="264.30" width="1.1" height="1.1" fill="#000"/>
<rect x="267.45" y="264.30" width="1.1" height="1.1" fill="#000"/>
<rect x="271.37" y="264.30" width="1.1" height="1.1" fill="#000"/>
<rect x="275.29" y="264.30" width="1.1" height="1.1" fill="#000"/>
<rect x="279.21" y="264.30" width="1.1" height="1.1" fill="#000"/>
<rect x="283.13" y="264.30" width="1.1" height="1.1" fill="#000"/>
<rect x="287.05" y="264.30" width="1.1" height="1.1" fill="#000"/>
<rect x="290.97" y="264.30" width="1.1" height="1.1" fill="#000"/>
<rect x="294.89" y="264.30" width="1.1" height="1.1" fill="#000"/>
<rect x="298.81" y="264.30" width="1.1" height="1.1" fill="#000"/>
<rect x="302.73" y="264.30" width="1.1" height="1.1" fill="#000"/>
<rect x="306.65" y="264.30" width="1.1" height="1.1" fill="#000"/>
<rect x="310.57" y="264.30" width="1.1" height="1.1" fill="#000"/>
<rect x="314.49" y="264.30" width="1.1" height="1.1" fill="#000"/>
<rect x="318.41" y="264.30" width="1.1" height="1.1" fill="#000"/>
<rect x="322.33" y="264.30" width="1.1" height="1.1" fill="#000"/>
<rect x="326.25" y="264.30" width="1.1" height="1.1" fill="#000"/>
<rect x="330.17" y="264.30" width="1.1" height="1.1" fill="#000"/>
<rect x="334.09" y="264.30" width="1.1" height="1.1" fill="#000"/>
<rect x="338.01" y="264.30" width="1.1" height="1.1" fill="#000"/>
<rect x="341.93" y="264.30" width="1.1" height="1.1" fill="#000"/>
<rect x="345.85" y="264.30" width="1.1" height="1.1" fill="#000"/>
<rect x="349.77" y="264.30" width="1.1" height="1.1" fill="#000"/>
<rect x="353.69" y="264.30" width="1.1" height="1.1" fill="#000"/>
<rect x="357.61" y="264.30" width="1.1" height="1.1" fill="#000"/>
<rect x="361.53" y="264.30" width="1.1" height="1.1" fill="#000"/>
<rect x="365.45" y="264.30" width="1.1" height="1.1" fill="#000"/>
<rect x="369.37" y="264.30" width="1.1" height="1.1" fill="#000"/>
<rect x="373.29" y="264.30" width="1.1" height="1.1" fill="#000"/>
<rect x="377.21" y="264.30" width="1.1" height="1.1" fill="#000"/>
<rect x="381.13" y="264.30" width="1.1" height="1.1" fill="#000"/>
<rect x="385.05" y="264.30" width="1.1" height="1.1" fill="#000"/>
<rect x="388.97" y="264.30" width="1.1" height="1.1" fill="#000"/>
<rect x="392.89" y="264.30" width="1.1" height="1.1" fill="#000"/>
<rect x="396.81" y="264.30" width="1.1" height="1.1" fill="#000"/>
<rect x="400.73" y="264.30" width="1.1" height="1.1" fill="#000"/>
<rect x="404.65" y="264.30" width="1.1" height="1.1" fill="#000"/>
<rect x="408.57" y="264.30" width="1.1" height="1.1" fill="#000"/>
<rect x="412.49" y="264.30" width="1.1" height="1.1" fill="#000"/>
<rect x="416.41" y="264.30" width="1.1" height="1.1" fill="#000"/>
<rect x="420.33" y="264.30" width="1.1" height="1.1" fill="#000"/>
<rect x="424.25" y="264.30" width="1.1" height="1.1" fill="#000"/>
<rect x="428.17" y="264.30" width="1.1" height="1.1" fill="#000"/>
<rect x="432.09" y="264.30" width="1.1" height="1.1" fill="#000"/>
<rect x="172.50" y="283.70" width="1.1" height="1.1" fill="#000"/>
<rect x="176.42" y="283.70" width="1.1" height="1.1" fill="#000"/>
<rect x="180.34" y="283.70" width="1.1" height="1.1" fill="#000"/>
<rect x="184.26" y="283.70" width="1.1" height="1.1" fill="#000"/>
<rect x="188.18" y="283.70" width="1.1" height="1.1" fill="#000"/>
<rect x="192.10" y="283.70" width="1.1" height="1.1" fill="#000"/>
<rect x="196.02" y="283.70" width="1.1" height="1.1" fill="#000"/>
<rect x="199.94" y="283.70" width="1.1" height="1.1" fill="#000"/>
<rect x="203.86" y="283.70" width="1.1" height="1.1" fill="#000"/>
<rect x="207.78" y="283.70" width="1.1" height="1.1" fill="#000"/>
<rect x="211.70" y="283.70" width="1.1" height="1.1" fill="#000"/>
<rect x="215.62" y="283.70" width="1.1" height="1.1" fill="#000"/>
<rect x="219.54" y="283.70" width="1.1" height="1.1" fill="#000"/>
<rect x="223.46" y="283.70" width="1.1" height="1.1" fill="#000"/>
<rect x="227.38" y="283.70" width="1.1" height="1.1" fill="#000"/>
<rect x="231.30" y="283.70" width="1.1" height="1.1" fill="#000"/>
<rect x="235.22" y="283.70" width="1.1" height="1.1" fill="#000"/>
<rect x="239.14" y="283.70" width="1.1" height="1.1" fill="#000"/>
<rect x="243.06" y="283.70" width="1.1" height="1.1" fill="#000"/>
<rect x="246.98" y="283.70" width="1.1" height="1.1" fill="#000"/>
<rect x="250.90" y="283.70" width="1.1" height="1.1" fill="#000"/>
<rect x="254.82" y="283.70" width="1.1" height="1.1" fill="#000"/>
<rect x="258.74" y="283.70" width="1.1" height="1.1" fill="#000"/>
<rect x="262.66" y="283.70" width="1.1" height="1.1" fill="#000"/>
<rect x="266.58" y="283.70" width="1.1" height="1.1" fill="#000"/>
<rect x="270.50" y="283.70" width="1.1" height="1.1" fill="#000"/>
<rect x="274.42" y="283.70" width="1.1" height="1.1" fill="#000"/>
<rect x="278.34" y="283.70" width="1.1" height="1.1" fill="#000"/>
<rect x="282.26" y="283.70" width="1.1" height="1.1" fill="#000"/>
<rect x="286.18" y="283.70" width="1.1" height="1.1" fill="#000"/>
<rect x="290.10" y="283.70" width="1.1" height="1.1" fill="#000"/>
<rect x="294.02" y="283.70" width="1.1" height="1.1" fill="#000"/>
<rect x="297.94" y="283.70" width="1.1" height="1.1" fill="#000"/>
<rect x="301.86" y="283.70" width="1.1" height="1.1" fill="#000"/>
<rect x="305.78" y="283.70" width="1.1" height="1.1" fill="#000"/>
<rect x="309.70" y="283.70" width="1.1" height="1.1" fill="#000"/>
<rect x="313.62" y="283.70" width="1.1" height="1.1" fill="#000"/>
<rect x="317.54" y="283.70" width="1.1" height="1.1" fill="#000"/>
<rect x="321.46" y="283.70" width="1.1" height="1.1" fill="#000"/>
<rect x="325.38" y="283.70" width="1.1" height="1.1" fill="#000"/>
<rect x="329.30" y="283.70" width="1.1" height="1.1" fill="#000"/>
<rect x="333.22" y="283.70" width="1.1" height="1.1" fill="#000"/>
<rect x="337.14" y="283.70" width="1.1" height="1.1" fill="#000"/>
<rect x="341.06" y="283.70" width="1.1" height="1.1" fill="#000"/>
<rect x="344.98" y="283.70" width="1.1" height="1.1" fill="#000"/>
<rect x="348.90" y="283.70" width="1.1" height="1.1" fill="#000"/>
<rect x="352.82" y="283.70" width="1.1" height="1.1" fill="#000"/>
<rect x="356.74" y="283.70" width="1.1" height="1.1" fill="#000"/>
<rect x="360.66" y="283.70" width="1.1" height="1.1" fill="#000"/>
<rect x="364.58" y="283.70" width="1.1" height="1.1" fill="#000"/>
<rect x="368.50" y="283.70" width="1.1" height="1.1" fill="#000"/>
<rect x="372.42" y="283.70" width="1.1" height="1.1" fill="#000"/>
<rect x="376.34" y="283.70" width="1.1" height="1.1" fill="#000"/>
<rect x="380.26" y="283.70" width="1.1" height="1.1" fill="#000"/>
<rect x="384.18" y="283.70" width="1.1" height="1.1" fill="#000"/>
<rect x="388.10" y="283.70" width="1.1" height="1.1" fill="#000"/>
<rect x="392.02" y="283.70" width="1.1" height="1.1" fill="#000"/>
<rect x="395.94" y="283.70" width="1.1" height="1.1" fill="#000"/>
<rect x="399.86" y="283.70" width="1.1" height="1.1" fill="#000"/>
<rect x="403.78" y="283.70" width="1.1" height="1.1" fill="#000"/>
<rect x="407.70" y="283.70" width="1.1" height="1.1" fill="#000"/>
<rect x="411.62" y="283.70" width="1.1" height="1.1" fill="#000"/>
<rect x="415.54" y="283.70" width="1.1" height="1.1" fill="#000"/>
<rect x="419.46" y="283.70" width="1.1" height="1.1" fill="#000"/>
<rect x="423.38" y="283.70" width="1.1" height="1.1" fill="#000"/>
<rect x="427.30" y="283.70" width="1.1" height="1.1" fill="#000"/>
<rect x="431.22" y="283.70" width="1.1" height="1.1" fill="#000"/>
<rect x="435.14" y="283.70" width="1.1" height="1.1" fill="#000"/>
<rect x="195.15" y="302.80" width="1.1" height="1.1" fill="#000"/>
<rect x="199.07" y="302.80" width="1.1" height="1.1" fill="#000"/>
<rect x="202.99" y="302.80" width="1.1" height="1.1" fill="#000"/>
<rect x="206.91" y="302.80" width="1.1" height="1.1" fill="#000"/>
<rect x="210.83" y="302.80" width="1.1" height="1.1" fill="#000"/>
<rect x="214.75" y="302.80" width="1.1" height="1.1" fill="#000"/>
<rect x="218.67" y="302.80" width="1.1" height="1.1" fill="#000"/>
<rect x="222.59" y="302.80" width="1.1" height="1.1" fill="#000"/>
<rect x="226.51" y="302.80" width="1.1" height="1.1" fill="#000"/>
<rect x="230.43" y="302.80" width="1.1" height="1.1" fill="#000"/>
<rect x="234.35" y="302.80" width="1.1" height="1.1" fill="#000"/>
<rect x="238.27" y="302.80" width="1.1" height="1.1" fill="#000"/>
<rect x="242.19" y="302.80" width="1.1" height="1.1" fill="#000"/>
<rect x="246.11" y="302.80" width="1.1" height="1.1" fill="#000"/>
<rect x="250.03" y="302.80" width="1.1" height="1.1" fill="#000"/>
<rect x="253.95" y="302.80" width="1.1" height="1.1" fill="#000"/>
<rect x="257.87" y="302.80" width="1.1" height="1.1" fill="#000"/>
<rect x="261.79" y="302.80" width="1.1" height="1.1" fill="#000"/>
<rect x="265.71" y="302.80" width="1.1" height="1.1" fill="#000"/>
<rect x="269.63" y="302.80" width="1.1" height="1.1" fill="#000"/>
<rect x="273.55" y="302.80" width="1.1" height="1.1" fill="#000"/>
<rect x="277.47" y="302.80" width="1.1" height="1.1" fill="#000"/>
<rect x="281.39" y="302.80" width="1.1" height="1.1" fill="#000"/>
<rect x="285.31" y="302.80" width="1.1" height="1.1" fill="#000"/>
<rect x="289.23" y="302.80" width="1.1" height="1.1" fill="#000"/>
<rect x="293.15" y="302.80" width="1.1" height="1.1" fill="#000"/>
<rect x="297.07" y="302.80" width="1.1" height="1.1" fill="#000"/>
<rect x="300.99" y="302.80" width="1.1" height="1.1" fill="#000"/>
<rect x="304.91" y="302.80" width="1.1" height="1.1" fill="#000"/>
<rect x="308.83" y="302.80" width="1.1" height="1.1" fill="#000"/>
<rect x="312.75" y="302.80" width="1.1" height="1.1" fill="#000"/>
<rect x="316.67" y="302.80" width="1.1" height="1.1" fill="#000"/>
<rect x="320.59" y="302.80" width="1.1" height="1.1" fill="#000"/>
<rect x="324.51" y="302.80" width="1.1" height="1.1" fill="#000"/>
<rect x="328.43" y="302.80" width="1.1" height="1.1" fill="#000"/>
<rect x="332.35" y="302.80" width="1.1" height="1.1" fill="#000"/>
<rect x="336.27" y="302.80" width="1.1" height="1.1" fill="#000"/>
<rect x="340.19" y="302.80" width="1.1" height="1.1" fill="#000"/>
<rect x="344.11" y="302.80" width="1.1" height="1.1" fill="#000"/>
<rect x="348.03" y="302.80" width="1.1" height="1.1" fill="#000"/>
<rect x="351.95" y="302.80" width="1.1" height="1.1" fill="#000"/>
<rect x="355.87" y="302.80" width="1.1" height="1.1" fill="#000"/>
<rect x="359.79" y="302.80" width="1.1" height="1.1" fill="#000"/>
<rect x="363.71" y="302.80" width="1.1" height="1.1" fill="#000"/>
<rect x="367.63" y="302.80" width="1.1" height="1.1" fill="#000"/>
<rect x="371.55" y="302.80" width="1.1" height="1.1" fill="#000"/>
<rect x="375.47" y="302.80" width="1.1" height="1.1" fill="#000"/>
<rect x="379.39" y="302.80" width="1.1" height="1.1" fill="#000"/>
<rect x="383.31" y="302.80" width="1.1" height="1.1" fill="#000"/>
<rect x="387.23" y="302.80" width="1.1" height="1.1" fill="#000"/>
<rect x="391.15" y="302.80" width="1.1" height="1.1" fill="#000"/>
<rect x="395.07" y="302.80" width="1.1" height="1.1" fill="#000"/>
<rect x="398.99" y="302.80" width="1.1" height="1.1" fill="#000"/>
<rect x="402.91" y="302.80" width="1.1" height="1.1" fill="#000"/>
<rect x="406.83" y="302.80" width="1.1" height="1.1" fill="#000"/>
<rect x="410.75" y="302.80" width="1.1" height="1.1" fill="#000"/>
<rect x="414.67" y="302.80" width="1.1" height="1.1" fill="#000"/>
<rect x="418.59" y="302.80" width="1.1" height="1.1" fill="#000"/>
<rect x="422.51" y="302.80" width="1.1" height="1.1" fill="#000"/>
<rect x="426.43" y="302.80" width="1.1" height="1.1" fill="#000"/>
<rect x="430.35" y="302.80" width="1.1" height="1.1" fill="#000"/>
<rect x="434.27" y="302.80" width="1.1" height="1.1" fill="#000"/>
<rect x="183.85" y="322.20" width="1.1" height="1.1" fill="#000"/>
<rect x="187.77" y="322.20" width="1.1" height="1.1" fill="#000"/>
<rect x="191.69" y="322.20" width="1.1" height="1.1" fill="#000"/>
<rect x="195.61" y="322.20" width="1.1" height="1.1" fill="#000"/>
<rect x="199.53" y="322.20" width="1.1" height="1.1" fill="#000"/>
<rect x="203.45" y="322.20" width="1.1" height="1.1" fill="#000"/>
<rect x="207.37" y="322.20" width="1.1" height="1.1" fill="#000"/>
<rect x="211.29" y="322.20" width="1.1" height="1.1" fill="#000"/>
<rect x="215.21" y="322.20" width="1.1" height="1.1" fill="#000"/>
<rect x="219.13" y="322.20" width="1.1" height="1.1" fill="#000"/>
<rect x="223.05" y="322.20" width="1.1" height="1.1" fill="#000"/>
<rect x="226.97" y="322.20" width="1.1" height="1.1" fill="#000"/>
<rect x="230.89" y="322.20" width="1.1" height="1.1" fill="#000"/>
<rect x="234.81" y="322.20" width="1.1" height="1.1" fill="#000"/>
<rect x="238.73" y="322.20" width="1.1" height="1.1" fill="#000"/>
<rect x="242.65" y="322.20" width="1.1" height="1.1" fill="#000"/>
<rect x="246.57" y="322.20" width="1.1" height="1.1" fill="#000"/>
<rect x="250.49" y="322.20" width="1.1" height="1.1" fill="#000"/>
<rect x="254.41" y="322.20" width="1.1" height="1.1" fill="#000"/>
<rect x="258.33" y="322.20" width="1.1" height="1.1" fill="#000"/>
<rect x="262.25" y="322.20" width="1.1" height="1.1" fill="#000"/>
<rect x="266.17" y="322.20" width="1.1" height="1.1" fill="#000"/>
<rect x="270.09" y="322.20" width="1.1" height="1.1" fill="#000"/>
<rect x="274.01" y="322.20" width="1.1" height="1.1" fill="#000"/>
<rect x="277.93" y="322.20" width="1.1" height="1.1" fill="#000"/>
<rect x="281.85" y="322.20" width="1.1" height="1.1" fill="#000"/>
<rect x="285.77" y="322.20" width="1.1" height="1.1" fill="#000"/>
<rect x="289.69" y="322.20" width="1.1" height="1.1" fill="#000"/>
<rect x="293.61" y="322.20" width="1.1" height="1.1" fill="#000"/>
<rect x="297.53" y="322.20" width="1.1" height="1.1" fill="#000"/>
<rect x="301.45" y="322.20" width="1.1" height="1.1" fill="#000"/>
<rect x="305.37" y="322.20" width="1.1" height="1.1" fill="#000"/>
<rect x="309.29" y="322.20" width="1.1" height="1.1" fill="#000"/>
<rect x="313.21" y="322.20" width="1.1" height="1.1" fill="#000"/>
<rect x="317.13" y="322.20" width="1.1" height="1.1" fill="#000"/>
<rect x="321.05" y="322.20" width="1.1" height="1.1" fill="#000"/>
<rect x="324.97" y="322.20" width="1.1" height="1.1" fill="#000"/>
<rect x="328.89" y="322.20" width="1.1" height="1.1" fill="#000"/>
<rect x="332.81" y="322.20" width="1.1" height="1.1" fill="#000"/>
<rect x="336.73" y="322.20" width="1.1" height="1.1" fill="#000"/>
<rect x="340.65" y="322.20" width="1.1" height="1.1" fill="#000"/>
<rect x="344.57" y="322.20" width="1.1" height="1.1" fill="#000"/>
<rect x="348.49" y="322.20" width="1.1" height="1.1" fill="#000"/>
<rect x="352.41" y="322.20" width="1.1" height="1.1" fill="#000"/>
<rect x="356.33" y="322.20" width="1.1" height="1.1" fill="#000"/>
<rect x="360.25" y="322.20" width="1.1" height="1.1" fill="#000"/>
<rect x="364.17" y="322.20" width="1.1" height="1.1" fill="#000"/>
<rect x="368.09" y="322.20" width="1.1" height="1.1" fill="#000"/>
<rect x="372.01" y="322.20" width="1.1" height="1.1" fill="#000"/>
<rect x="375.93" y="322.20" width="1.1" height="1.1" fill="#000"/>
<rect x="379.85" y="322.20" width="1.1" height="1.1" fill="#000"/>
<rect x="383.77" y="322.20" width="1.1" height="1.1" fill="#000"/>
<rect x="387.69" y="322.20" width="1.1" height="1.1" fill="#000"/>
<rect x="391.61" y="322.20" width="1.1" height="1.1" fill="#000"/>
<rect x="395.53" y="322.20" width="1.1" height="1.1" fill="#000"/>
<rect x="399.45" y="322.20" width="1.1" height="1.1" fill="#000"/>
<rect x="403.37" y="322.20" width="1.1" height="1.1" fill="#000"/>
<rect x="407.29" y="322.20" width="1.1" height="1.1" fill="#000"/>
<rect x="411.21" y="322.20" width="1.1" height="1.1" fill="#000"/>
<rect x="415.13" y="322.20" width="1.1" height="1.1" fill="#000"/>
<rect x="419.05" y="322.20" width="1.1" height="1.1" fill="#000"/>
<rect x="422.97" y="322.20" width="1.1" height="1.1" fill="#000"/>
<rect x="426.89" y="322.20" width="1.1" height="1.1" fill="#000"/>
<rect x="430.81" y="322.20" width="1.1" height="1.1" fill="#000"/>
<rect x="434.73" y="322.20" width="1.1" height="1.1" fill="#000"/>
<rect x="153.65" y="341.80" width="1.1" height="1.1" fill="#000"/>
<rect x="157.57" y="341.80" width="1.1" height="1.1" fill="#000"/>
<rect x="161.49" y="341.80" width="1.1" height="1.1" fill="#000"/>
<rect x="165.41" y="341.80" width="1.1" height="1.1" fill="#000"/>
<rect x="169.33" y="341.80" width="1.1" height="1.1" fill="#000"/>
<rect x="173.25" y="341.80" width="1.1" height="1.1" fill="#000"/>
<rect x="177.17" y="341.80" width="1.1" height="1.1" fill="#000"/>
<rect x="181.09" y="341.80" width="1.1" height="1.1" fill="#000"/>
<rect x="185.01" y="341.80" width="1.1" height="1.1" fill="#000"/>
<rect x="188.93" y="341.80" width="1.1" height="1.1" fill="#000"/>
<rect x="192.85" y="341.80" width="1.1" height="1.1" fill="#000"/>
<rect x="196.77" y="341.80" width="1.1" height="1.1" fill="#000"/>
<rect x="200.69" y="341.80" width="1.1" height="1.1" fill="#000"/>
<rect x="204.61" y="341.80" width="1.1" height="1.1" fill="#000"/>
<rect x="208.53" y="341.80" width="1.1" height="1.1" fill="#000"/>
<rect x="212.45" y="341.80" width="1.1" height="1.1" fill="#000"/>
<rect x="216.37" y="341.80" width="1.1" height="1.1" fill="#000"/>
<rect x="220.29" y="341.80" width="1.1" height="1.1" fill="#000"/>
<rect x="224.21" y="341.80" width="1.1" height="1.1" fill="#000"/>
<rect x="228.13" y="341.80" width="1.1" height="1.1" fill="#000"/>
<rect x="232.05" y="341.80" width="1.1" height="1.1" fill="#000"/>
<rect x="235.97" y="341.80" width="1.1" height="1.1" fill="#000"/>
<rect x="239.89" y="341.80" width="1.1" height="1.1" fill="#000"/>
<rect x="243.81" y="341.80" width="1.1" height="1.1" fill="#000"/>
<rect x="247.73" y="341.80" width="1.1" height="1.1" fill="#000"/>
<rect x="251.65" y="341.80" width="1.1" height="1.1" fill="#000"/>
<rect x="255.57" y="341.80" width="1.1" height="1.1" fill="#000"/>
<rect x="259.49" y="341.80" width="1.1" height="1.1" fill="#000"/>
<rect x="263.41" y="341.80" width="1.1" height="1.1" fill="#000"/>
<rect x="267.33" y="341.80" width="1.1" height="1.1" fill="#000"/>
<rect x="271.25" y="341.80" width="1.1" height="1.1" fill="#000"/>
<rect x="275.17" y="341.80" width="1.1" height="1.1" fill="#000"/>
<rect x="279.09" y="341.80" width="1.1" height="1.1" fill="#000"/>
<rect x="283.01" y="341.80" width="1.1" height="1.1" fill="#000"/>
<rect x="286.93" y="341.80" width="1.1" height="1.1" fill="#000"/>
<rect x="290.85" y="341.80" width="1.1" height="1.1" fill="#000"/>
<rect x="294.77" y="341.80" width="1.1" height="1.1" fill="#000"/>
<rect x="298.69" y="341.80" width="1.1" height="1.1" fill="#000"/>
<rect x="302.61" y="341.80" width="1.1" height="1.1" fill="#000"/>
<rect x="306.53" y="341.80" width="1.1" height="1.1" fill="#000"/>
<rect x="310.45" y="341.80" width="1.1" height="1.1" fill="#000"/>
<rect x="314.37" y="341.80" width="1.1" height="1.1" fill="#000"/>
<rect x="318.29" y="341.80" width="1.1" height="1.1" fill="#000"/>
<rect x="322.21" y="341.80" width="1.1" height="1.1" fill="#000"/>
<rect x="326.13" y="341.80" width="1.1" height="1.1" fill="#000"/>
<rect x="330.05" y="341.80" width="1.1" height="1.1" fill="#000"/>
<rect x="333.97" y="341.80" width="1.1" height="1.1" fill="#000"/>
<rect x="337.89" y="341.80" width="1.1" height="1.1" fill="#000"/>
<rect x="341.81" y="341.80" width="1.1" height="1.1" fill="#000"/>
<rect x="345.73" y="341.80" width="1.1" height="1.1" fill="#000"/>
<rect x="349.65" y="341.80" width="1.1" height="1.1" fill="#000"/>
<rect x="353.57" y="341.80" width="1.1" height="1.1" fill="#000"/>
<rect x="357.49" y="341.80" width="1.1" height="1.1" fill="#000"/>
<rect x="361.41" y="341.80" width="1.1" height="1.1" fill="#000"/>
<rect x="365.33" y="341.80" width="1.1" height="1.1" fill="#000"/>
<rect x="369.25" y="341.80" width="1.1" height="1.1" fill="#000"/>
<rect x="373.17" y="341.80" width="1.1" height="1.1" fill="#000"/>
<rect x="377.09" y="341.80" width="1.1" height="1.1" fill="#000"/>
<rect x="381.01" y="341.80" width="1.1" height="1.1" fill="#000"/>
<rect x="384.93" y="341.80" width="1.1" height="1.1" fill="#000"/>
<rect x="388.85" y="341.80" width="1.1" height="1.1" fill="#000"/>
<rect x="392.77" y="341.80" width="1.1" height="1.1" fill="#000"/>
<rect x="396.69" y="341.80" width="1.1" height="1.1" fill="#000"/>
<rect x="400.61" y="341.80" width="1.1" height="1.1" fill="#000"/>
<rect x="404.53" y="341.80" width="1.1" height="1.1" fill="#000"/>
<rect x="408.45" y="341.80" width="1.1" height="1.1" fill="#000"/>
<rect x="412.37" y="341.80" width="1.1" height="1.1" fill="#000"/>
<rect x="416.29" y="341.80" width="1.1" height="1.1" fill="#000"/>
<rect x="420.21" y="341.80" width="1.1" height="1.1" fill="#000"/>
<rect x="424.13" y="341.80" width="1.1" height="1.1" fill="#000"/>
<rect x="428.05" y="341.80" width="1.1" height="1.1" fill="#000"/>
<rect x="431.97" y="341.80" width="1.1" height="1.1" fill="#000"/>
<rect x="191.40" y="361.20" width="1.1" height="1.1" fill="#000"/>
<rect x="195.32" y="361.20" width="1.1" height="1.1" fill="#000"/>
<rect x="199.24" y="361.20" width="1.1" height="1.1" fill="#000"/>
<rect x="203.16" y="361.20" width="1.1" height="1.1" fill="#000"/>
<rect x="207.08" y="361.20" width="1.1" height="1.1" fill="#000"/>
<rect x="211.00" y="361.20" width="1.1" height="1.1" fill="#000"/>
<rect x="214.92" y="361.20" width="1.1" height="1.1" fill="#000"/>
<rect x="218.84" y="361.20" width="1.1" height="1.1" fill="#000"/>
<rect x="222.76" y="361.20" width="1.1" height="1.1" fill="#000"/>
<rect x="226.68" y="361.20" width="1.1" height="1.1" fill="#000"/>
<rect x="230.60" y="361.20" width="1.1" height="1.1" fill="#000"/>
<rect x="234.52" y="361.20" width="1.1" height="1.1" fill="#000"/>
<rect x="238.44" y="361.20" width="1.1" height="1.1" fill="#000"/>
<rect x="242.36" y="361.20" width="1.1" height="1.1" fill="#000"/>
<rect x="246.28" y="361.20" width="1.1" height="1.1" fill="#000"/>
<rect x="250.20" y="361.20" width="1.1" height="1.1" fill="#000"/>
<rect x="254.12" y="361.20" width="1.1" height="1.1" fill="#000"/>
<rect x="258.04" y="361.20" width="1.1" height="1.1" fill="#000"/>
<rect x="261.96" y="361.20" width="1.1" height="1.1" fill="#000"/>
<rect x="265.88" y="361.20" width="1.1" height="1.1" fill="#000"/>
<rect x="269.80" y="361.20" width="1.1" height="1.1" fill="#000"/>
<rect x="273.72" y="361.20" width="1.1" height="1.1" fill="#000"/>
<rect x="277.64" y="361.20" width="1.1" height="1.1" fill="#000"/>
<rect x="281.56" y="361.20" width="1.1" height="1.1" fill="#000"/>
<rect x="285.48" y="361.20" width="1.1" height="1.1" fill="#000"/>
<rect x="289.40" y="361.20" width="1.1" height="1.1" fill="#000"/>
<rect x="293.32" y="361.20" width="1.1" height="1.1" fill="#000"/>
<rect x="297.24" y="361.20" width="1.1" height="1.1" fill="#000"/>
<rect x="301.16" y="361.20" width="1.1" height="1.1" fill="#000"/>
<rect x="305.08" y="361.20" width="1.1" height="1.1" fill="#000"/>
<rect x="309.00" y="361.20" width="1.1" height="1.1" fill="#000"/>
<rect x="312.92" y="361.20" width="1.1" height="1.1" fill="#000"/>
<rect x="316.84" y="361.20" width="1.1" height="1.1" fill="#000"/>
<rect x="320.76" y="361.20" width="1.1" height="1.1" fill="#000"/>
<rect x="324.68" y="361.20" width="1.1" height="1.1" fill="#000"/>
<rect x="328.60" y="361.20" width="1.1" height="1.1" fill="#000"/>
<rect x="332.52" y="361.20" width="1.1" height="1.1" fill="#000"/>
<rect x="336.44" y="361.20" width="1.1" height="1.1" fill="#000"/>
<rect x="340.36" y="361.20" width="1.1" height="1.1" fill="#000"/>
<rect x="344.28" y="361.20" width="1.1" height="1.1" fill="#000"/>
<rect x="348.20" y="361.20" width="1.1" height="1.1" fill="#000"/>
<rect x="352.12" y="361.20" width="1.1" height="1.1" fill="#000"/>
<rect x="356.04" y="361.20" width="1.1" height="1.1" fill="#000"/>
<rect x="359.96" y="361.20" width="1.1" height="1.1" fill="#000"/>
<rect x="363.88" y="361.20" width="1.1" height="1.1" fill="#000"/>
<rect x="367.80" y="361.20" width="1.1" height="1.1" fill="#000"/>
<rect x="371.72" y="361.20" width="1.1" height="1.1" fill="#000"/>
<rect x="375.64" y="361.20" width="1.1" height="1.1" fill="#000"/>
<rect x="379.56" y="361.20" width="1.1" height="1.1" fill="#000"/>
<rect x="383.48" y="361.20" width="1.1" height="1.1" fill="#000"/>
<rect x="387.40" y="361.20" width="1.1" height="1.1" fill="#000"/>
<rect x="391.32" y="361.20" width="1.1" height="1.1" fill="#000"/>
<rect x="395.24" y="361.20" width="1.1" height="1.1" fill="#000"/>
<rect x="399.16" y="361.20" width="1.1" height="1.1" fill="#000"/>
<rect x="403.08" y="361.20" width="1.1" height="1.1" fill="#000"/>
<rect x="407.00" y="361.20" width="1.1" height="1.1" fill="#000"/>
<rect x="410.92" y="361.20" width="1.1" height="1.1" fill="#000"/>
<rect x="414.84" y="361.20" width="1.1" height="1.1" fill="#000"/>
<rect x="418.76" y="361.20" width="1.1" height="1.1" fill="#000"/>
<rect x="422.68" y="361.20" width="1.1" height="1.1" fill="#000"/>
<rect x="426.60" y="361.20" width="1.1" height="1.1" fill="#000"/>
<rect x="430.52" y="361.20" width="1.1" height="1.1" fill="#000"/>
<rect x="434.44" y="361.20" width="1.1" height="1.1" fill="#000"/>
<rect x="153.65" y="379.50" width="1.1" height="1.1" fill="#000"/>
<rect x="157.57" y="379.50" width="1.1" height="1.1" fill="#000"/>
<rect x="161.49" y="379.50" width="1.1" height="1.1" fill="#000"/>
<rect x="165.41" y="379.50" width="1.1" height="1.1" fill="#000"/>
<rect x="169.33" y="379.50" width="1.1" height="1.1" fill="#000"/>
<rect x="173.25" y="379.50" width="1.1" height="1.1" fill="#000"/>
<rect x="177.17" y="379.50" width="1.1" height="1.1" fill="#000"/>
<rect x="181.09" y="379.50" width="1.1" height="1.1" fill="#000"/>
<rect x="185.01" y="379.50" width="1.1" height="1.1" fill="#000"/>
<rect x="188.93" y="379.50" width="1.1" height="1.1" fill="#000"/>
<rect x="192.85" y="379.50" width="1.1" height="1.1" fill="#000"/>
<rect x="196.77" y="379.50" width="1.1" height="1.1" fill="#000"/>
<rect x="200.69" y="379.50" width="1.1" height="1.1" fill="#000"/>
<rect x="204.61" y="379.50" width="1.1" height="1.1" fill="#000"/>
<rect x="208.53" y="379.50" width="1.1" height="1.1" fill="#000"/>
<rect x="212.45" y="379.50" width="1.1" height="1.1" fill="#000"/>
<rect x="216.37" y="379.50" width="1.1" height="1.1" fill="#000"/>
<rect x="220.29" y="379.50" width="1.1" height="1.1" fill="#000"/>
<rect x="224.21" y="379.50" width="1.1" height="1.1" fill="#000"/>
<rect x="228.13" y="379.50" width="1.1" height="1.1" fill="#000"/>
<rect x="232.05" y="379.50" width="1.1" height="1.1" fill="#000"/>
<rect x="235.97" y="379.50" width="1.1" height="1.1" fill="#000"/>
<rect x="239.89" y="379.50" width="1.1" height="1.1" fill="#000"/>
<rect x="243.81" y="379.50" width="1.1" height="1.1" fill="#000"/>
<rect x="247.73" y="379.50" width="1.1" height="1.1" fill="#000"/>
<rect x="251.65" y="379.50" width="1.1" height="1.1" fill="#000"/>
<rect x="255.57" y="379.50" width="1.1" height="1.1" fill="#000"/>
<rect x="259.49" y="379.50" width="1.1" height="1.1" fill="#000"/>
<rect x="263.41" y="379.50" width="1.1" height="1.1" fill="#000"/>
<rect x="267.33" y="379.50" width="1.1" height="1.1" fill="#000"/>
<rect x="271.25" y="379.50" width="1.1" height="1.1" fill="#000"/>
<rect x="275.17" y="379.50" width="1.1" height="1.1" fill="#000"/>
<rect x="279.09" y="379.50" width="1.1" height="1.1" fill="#000"/>
<rect x="283.01" y="379.50" width="1.1" height="1.1" fill="#000"/>
<rect x="286.93" y="379.50" width="1.1" height="1.1" fill="#000"/>
<rect x="290.85" y="379.50" width="1.1" height="1.1" fill="#000"/>
<rect x="294.77" y="379.50" width="1.1" height="1.1" fill="#000"/>
<rect x="298.69" y="379.50" width="1.1" height="1.1" fill="#000"/>
<rect x="302.61" y="379.50" width="1.1" height="1.1" fill="#000"/>
<rect x="306.53" y="379.50" width="1.1" height="1.1" fill="#000"/>
<rect x="310.45" y="379.50" width="1.1" height="1.1" fill="#000"/>
<rect x="314.37" y="379.50" width="1.1" height="1.1" fill="#000"/>
<rect x="318.29" y="379.50" width="1.1" height="1.1" fill="#000"/>
<rect x="322.21" y="379.50" width="1.1" height="1.1" fill="#000"/>
<rect x="326.13" y="379.50" width="1.1" height="1.1" fill="#000"/>
<rect x="330.05" y="379.50" width="1.1" height="1.1" fill="#000"/>
<rect x="333.97" y="379.50" width="1.1" height="1.1" fill="#000"/>
<rect x="337.89" y="379.50" width="1.1" height="1.1" fill="#000"/>
<rect x="341.81" y="379.50" width="1.1" height="1.1" fill="#000"/>
<rect x="345.73" y="379.50" width="1.1" height="1.1" fill="#000"/>
<rect x="349.65" y="379.50" width="1.1" height="1.1" fill="#000"/>
<rect x="353.57" y="379.50" width="1.1" height="1.1" fill="#000"/>
<rect x="357.49" y="379.50" width="1.1" height="1.1" fill="#000"/>
<rect x="361.41" y="379.50" width="1.1" height="1.1" fill="#000"/>
<rect x="365.33" y="379.50" width="1.1" height="1.1" fill="#000"/>
<rect x="369.25" y="379.50" width="1.1" height="1.1" fill="#000"/>
<rect x="373.17" y="379.50" width="1.1" height="1.1" fill="#000"/>
<rect x="377.09" y="379.50" width="1.1" height="1.1" fill="#000"/>
<rect x="381.01" y="379.50" width="1.1" height="1.1" fill="#000"/>
<rect x="384.93" y="379.50" width="1.1" height="1.1" fill="#000"/>
<rect x="388.85" y="379.50" width="1.1" height="1.1" fill="#000"/>
<rect x="392.77" y="379.50" width="1.1" height="1.1" fill="#000"/>
<rect x="396.69" y="379.50" width="1.1" height="1.1" fill="#000"/>
<rect x="400.61" y="379.50" width="1.1" height="1.1" fill="#000"/>
<rect x="404.53" y="379.50" width="1.1" height="1.1" fill="#000"/>
<rect x="408.45" y="379.50" width="1.1" height="1.1" fill="#000"/>
<rect x="412.37" y="379.50" width="1.1" height="1.1" fill="#000"/>
<rect x="416.29" y="379.50" width="1.1" height="1.1" fill="#000"/>
<rect x="420.21" y="379.50" width="1.1" height="1.1" fill="#000"/>
<rect x="424.13" y="379.50" width="1.1" height="1.1" fill="#000"/>
<rect x="428.05" y="379.50" width="1.1" height="1.1" fill="#000"/>
<rect x="431.97" y="379.50" width="1.1" height="1.1" fill="#000"/>
<rect x="221.60" y="398.70" width="1.1" height="1.1" fill="#000"/>
<rect x="225.52" y="398.70" width="1.1" height="1.1" fill="#000"/>
<rect x="229.44" y="398.70" width="1.1" height="1.1" fill="#000"/>
<rect x="233.36" y="398.70" width="1.1" height="1.1" fill="#000"/>
<rect x="237.28" y="398.70" width="1.1" height="1.1" fill="#000"/>
<rect x="241.20" y="398.70" width="1.1" height="1.1" fill="#000"/>
<rect x="245.12" y="398.70" width="1.1" height="1.1" fill="#000"/>
<rect x="249.04" y="398.70" width="1.1" height="1.1" fill="#000"/>
<rect x="252.96" y="398.70" width="1.1" height="1.1" fill="#000"/>
<rect x="256.88" y="398.70" width="1.1" height="1.1" fill="#000"/>
<rect x="260.80" y="398.70" width="1.1" height="1.1" fill="#000"/>
<rect x="264.72" y="398.70" width="1.1" height="1.1" fill="#000"/>
<rect x="268.64" y="398.70" width="1.1" height="1.1" fill="#000"/>
<rect x="272.56" y="398.70" width="1.1" height="1.1" fill="#000"/>
<rect x="276.48" y="398.70" width="1.1" height="1.1" fill="#000"/>
<rect x="280.40" y="398.70" width="1.1" height="1.1" fill="#000"/>
<rect x="284.32" y="398.70" width="1.1" height="1.1" fill="#000"/>
<rect x="288.24" y="398.70" width="1.1" height="1.1" fill="#000"/>
<rect x="292.16" y="398.70" width="1.1" height="1.1" fill="#000"/>
<rect x="296.08" y="398.70" width="1.1" height="1.1" fill="#000"/>
<rect x="300.00" y="398.70" width="1.1" height="1.1" fill="#000"/>
<rect x="303.92" y="398.70" width="1.1" height="1.1" fill="#000"/>
<rect x="307.84" y="398.70" width="1.1" height="1.1" fill="#000"/>
<rect x="311.76" y="398.70" width="1.1" height="1.1" fill="#000"/>
<rect x="315.68" y="398.70" width="1.1" height="1.1" fill="#000"/>
<rect x="319.60" y="398.70" width="1.1" height="1.1" fill="#000"/>
<rect x="323.52" y="398.70" width="1.1" height="1.1" fill="#000"/>
<rect x="327.44" y="398.70" width="1.1" height="1.1" fill="#000"/>
<rect x="331.36" y="398.70" width="1.1" height="1.1" fill="#000"/>
<rect x="335.28" y="398.70" width="1.1" height="1.1" fill="#000"/>
<rect x="339.20" y="398.70" width="1.1" height="1.1" fill="#000"/>
<rect x="343.12" y="398.70" width="1.1" height="1.1" fill="#000"/>
<rect x="347.04" y="398.70" width="1.1" height="1.1" fill="#000"/>
<rect x="350.96" y="398.70" width="1.1" height="1.1" fill="#000"/>
<rect x="354.88" y="398.70" width="1.1" height="1.1" fill="#000"/>
<rect x="358.80" y="398.70" width="1.1" height="1.1" fill="#000"/>
<rect x="362.72" y="398.70" width="1.1" height="1.1" fill="#000"/>
<rect x="366.64" y="398.70" width="1.1" height="1.1" fill="#000"/>
<rect x="370.56" y="398.70" width="1.1" height="1.1" fill="#000"/>
<rect x="374.48" y="398.70" width="1.1" height="1.1" fill="#000"/>
<rect x="378.40" y="398.70" width="1.1" height="1.1" fill="#000"/>
<rect x="382.32" y="398.70" width="1.1" height="1.1" fill="#000"/>
<rect x="386.24" y="398.70" width="1.1" height="1.1" fill="#000"/>
<rect x="390.16" y="398.70" width="1.1" height="1.1" fill="#000"/>
<rect x="394.08" y="398.70" width="1.1" height="1.1" fill="#000"/>
<rect x="398.00" y="398.70" width="1.1" height="1.1" fill="#000"/>
<rect x="401.92" y="398.70" width="1.1" height="1.1" fill="#000"/>
<rect x="405.84" y="398.70" width="1.1" height="1.1" fill="#000"/>
<rect x="409.76" y="398.70" width="1.1" height="1.1" fill="#000"/>
<rect x="413.68" y="398.70" width="1.1" height="1.1" fill="#000"/>
<rect x="417.60" y="398.70" width="1.1" height="1.1" fill="#000"/>
<rect x="421.52" y="398.70" width="1.1" height="1.1" fill="#000"/>
<rect x="425.44" y="398.70" width="1.1" height="1.1" fill="#000"/>
<rect x="429.36" y="398.70" width="1.1" height="1.1" fill="#000"/>
<rect x="433.28" y="398.70" width="1.1" height="1.1" fill="#000"/>
<rect x="176.30" y="417.50" width="1.1" height="1.1" fill="#000"/>
<rect x="180.22" y="417.50" width="1.1" height="1.1" fill="#000"/>
<rect x="184.14" y="417.50" width="1.1" height="1.1" fill="#000"/>
<rect x="188.06" y="417.50" width="1.1" height="1.1" fill="#000"/>
<rect x="191.98" y="417.50" width="1.1" height="1.1" fill="#000"/>
<rect x="195.90" y="417.50" width="1.1" height="1.1" fill="#000"/>
<rect x="199.82" y="417.50" width="1.1" height="1.1" fill="#000"/>
<rect x="203.74" y="417.50" width="1.1" height="1.1" fill="#000"/>
<rect x="207.66" y="417.50" width="1.1" height="1.1" fill="#000"/>
<rect x="211.58" y="417.50" width="1.1" height="1.1" fill="#000"/>
<rect x="215.50" y="417.50" width="1.1" height="1.1" fill="#000"/>
<rect x="219.42" y="417.50" width="1.1" height="1.1" fill="#000"/>
<rect x="223.34" y="417.50" width="1.1" height="1.1" fill="#000"/>
<rect x="227.26" y="417.50" width="1.1" height="1.1" fill="#000"/>
<rect x="231.18" y="417.50" width="1.1" height="1.1" fill="#000"/>
<rect x="235.10" y="417.50" width="1.1" height="1.1" fill="#000"/>
<rect x="239.02" y="417.50" width="1.1" height="1.1" fill="#000"/>
<rect x="242.94" y="417.50" width="1.1" height="1.1" fill="#000"/>
<rect x="246.86" y="417.50" width="1.1" height="1.1" fill="#000"/>
<rect x="250.78" y="417.50" width="1.1" height="1.1" fill="#000"/>
<rect x="254.70" y="417.50" width="1.1" height="1.1" fill="#000"/>
<rect x="258.62" y="417.50" width="1.1" height="1.1" fill="#000"/>
<rect x="262.54" y="417.50" width="1.1" height="1.1" fill="#000"/>
<rect x="266.46" y="417.50" width="1.1" height="1.1" fill="#000"/>
<rect x="270.38" y="417.50" width="1.1" height="1.1" fill="#000"/>
<rect x="274.30" y="417.50" width="1.1" height="1.1" fill="#000"/>
<rect x="278.22" y="417.50" width="1.1" height="1.1" fill="#000"/>
<rect x="282.14" y="417.50" width="1.1" height="1.1" fill="#000"/>
<rect x="286.06" y="417.50" width="1.1" height="1.1" fill="#000"/>
<rect x="289.98" y="417.50" width="1.1" height="1.1" fill="#000"/>
<rect x="293.90" y="417.50" width="1.1" height="1.1" fill="#000"/>
<rect x="297.82" y="417.50" width="1.1" height="1.1" fill="#000"/>
<rect x="301.74" y="417.50" width="1.1" height="1.1" fill="#000"/>
<rect x="305.66" y="417.50" width="1.1" height="1.1" fill="#000"/>
<rect x="309.58" y="417.50" width="1.1" height="1.1" fill="#000"/>
<rect x="313.50" y="417.50" width="1.1" height="1.1" fill="#000"/>
<rect x="317.42" y="417.50" width="1.1" height="1.1" fill="#000"/>
<rect x="321.34" y="417.50" width="1.1" height="1.1" fill="#000"/>
<rect x="325.26" y="417.50" width="1.1" height="1.1" fill="#000"/>
<rect x="329.18" y="417.50" width="1.1" height="1.1" fill="#000"/>
<rect x="333.10" y="417.50" width="1.1" height="1.1" fill="#000"/>
<rect x="337.02" y="417.50" width="1.1" height="1.1" fill="#000"/>
<rect x="340.94" y="417.50" width="1.1" height="1.1" fill="#000"/>
<rect x="344.86" y="417.50" width="1.1" height="1.1" fill="#000"/>
<rect x="348.78" y="417.50" width="1.1" height="1.1" fill="#000"/>
<rect x="352.70" y="417.50" width="1.1" height="1.1" fill="#000"/>
<rect x="356.62" y="417.50" width="1.1" height="1.1" fill="#000"/>
<rect x="360.54" y="417.50" width="1.1" height="1.1" fill="#000"/>
<rect x="364.46" y="417.50" width="1.1" height="1.1" fill="#000"/>
<rect x="368.38" y="417.50" width="1.1" height="1.1" fill="#000"/>
<rect x="372.30" y="417.50" width="1.1" height="1.1" fill="#000"/>
<rect x="376.22" y="417.50" width="1.1" height="1.1" fill="#000"/>
<rect x="380.14" y="417.50" width="1.1" height="1.1" fill="#000"/>
<rect x="384.06" y="417.50" width="1.1" height="1.1" fill="#000"/>
<rect x="387.98" y="417.50" width="1.1" height="1.1" fill="#000"/>
<rect x="391.90" y="417.50" width="1.1" height="1.1" fill="#000"/>
<rect x="395.82" y="417.50" width="1.1" height="1.1" fill="#000"/>
<rect x="399.74" y="417.50" width="1.1" height="1.1" fill="#000"/>
<rect x="403.66" y="417.50" width="1.1" height="1.1" fill="#000"/>
<rect x="407.58" y="417.50" width="1.1" height="1.1" fill="#000"/>
<rect x="411.50" y="417.50" width="1.1" height="1.1" fill="#000"/>
<rect x="415.42" y="417.50" width="1.1" height="1.1" fill="#000"/>
<rect x="419.34" y="417.50" width="1.1" height="1.1" fill="#000"/>
<rect x="423.26" y="417.50" width="1.1" height="1.1" fill="#000"/>
<rect x="427.18" y="417.50" width="1.1" height="1.1" fill="#000"/>
<rect x="431.10" y="417.50" width="1.1" height="1.1" fill="#000"/>
<rect x="435.02" y="417.50" width="1.1" height="1.1" fill="#000"/>
<rect x="176.30" y="436.70" width="1.1" height="1.1" fill="#000"/>
<rect x="180.22" y="436.70" width="1.1" height="1.1" fill="#000"/>
<rect x="184.14" y="436.70" width="1.1" height="1.1" fill="#000"/>
<rect x="188.06" y="436.70" width="1.1" height="1.1" fill="#000"/>
<rect x="191.98" y="436.70" width="1.1" height="1.1" fill="#000"/>
<rect x="195.90" y="436.70" width="1.1" height="1.1" fill="#000"/>
<rect x="199.82" y="436.70" width="1.1" height="1.1" fill="#000"/>
<rect x="203.74" y="436.70" width="1.1" height="1.1" fill="#000"/>
<rect x="207.66" y="436.70" width="1.1" height="1.1" fill="#000"/>
<rect x="211.58" y="436.70" width="1.1" height="1.1" fill="#000"/>
<rect x="215.50" y="436.70" width="1.1" height="1.1" fill="#000"/>
<rect x="219.42" y="436.70" width="1.1" height="1.1" fill="#000"/>
<rect x="223.34" y="436.70" width="1.1" height="1.1" fill="#000"/>
<rect x="227.26" y="436.70" width="1.1" height="1.1" fill="#000"/>
<rect x="231.18" y="436.70" width="1.1" height="1.1" fill="#000"/>
<rect x="235.10" y="436.70" width="1.1" height="1.1" fill="#000"/>
<rect x="239.02" y="436.70" width="1.1" height="1.1" fill="#000"/>
<rect x="242.94" y="436.70" width="1.1" height="1.1" fill="#000"/>
<rect x="246.86" y="436.70" width="1.1" height="1.1" fill="#000"/>
<rect x="250.78" y="436.70" width="1.1" height="1.1" fill="#000"/>
<rect x="254.70" y="436.70" width="1.1" height="1.1" fill="#000"/>
<rect x="258.62" y="436.70" width="1.1" height="1.1" fill="#000"/>
<rect x="262.54" y="436.70" width="1.1" height="1.1" fill="#000"/>
<rect x="266.46" y="436.70" width="1.1" height="1.1" fill="#000"/>
<rect x="270.38" y="436.70" width="1.1" height="1.1" fill="#000"/>
<rect x="274.30" y="436.70" width="1.1" height="1.1" fill="#000"/>
<rect x="278.22" y="436.70" width="1.1" height="1.1" fill="#000"/>
<rect x="282.14" y="436.70" width="1.1" height="1.1" fill="#000"/>
<rect x="286.06" y="436.70" width="1.1" height="1.1" fill="#000"/>
<rect x="289.98" y="436.70" width="1.1" height="1.1" fill="#000"/>
<rect x="293.90" y="436.70" width="1.1" height="1.1" fill="#000"/>
<rect x="297.82" y="436.70" width="1.1" height="1.1" fill="#000"/>
<rect x="301.74" y="436.70" width="1.1" height="1.1" fill="#000"/>
<rect x="305.66" y="436.70" width="1.1" height="1.1" fill="#000"/>
<rect x="309.58" y="436.70" width="1.1" height="1.1" fill="#000"/>
<rect x="313.50" y="436.70" width="1.1" height="1.1" fill="#000"/>
<rect x="317.42" y="436.70" width="1.1" height="1.1" fill="#000"/>
<rect x="321.34" y="436.70" width="1.1" height="1.1" fill="#000"/>
<rect x="325.26" y="436.70" width="1.1" height="1.1" fill="#000"/>
<rect x="329.18" y="436.70" width="1.1" height="1.1" fill="#000"/>
<rect x="333.10" y="436.70" width="1.1" height="1.1" fill="#000"/>
<rect x="337.02" y="436.70" width="1.1" height="1.1" fill="#000"/>
<rect x="340.94" y="436.70" width="1.1" height="1.1" fill="#000"/>
<rect x="344.86" y="436.70" width="1.1" height="1.1" fill="#000"/>
<rect x="348.78" y="436.70" width="1.1" height="1.1" fill="#000"/>
<rect x="352.70" y="436.70" width="1.1" height="1.1" fill="#000"/>
<rect x="356.62" y="436.70" width="1.1" height="1.1" fill="#000"/>
<rect x="360.54" y="436.70" width="1.1" height="1.1" fill="#000"/>
<rect x="364.46" y="436.70" width="1.1" height="1.1" fill="#000"/>
<rect x="368.38" y="436.70" width="1.1" height="1.1" fill="#000"/>
<rect x="372.30" y="436.70" width="1.1" height="1.1" fill="#000"/>
<rect x="376.22" y="436.70" width="1.1" height="1.1" fill="#000"/>
<rect x="380.14" y="436.70" width="1.1" height="1.1" fill="#000"/>
<rect x="384.06" y="436.70" width="1.1" height="1.1" fill="#000"/>
<rect x="387.98" y="436.70" width="1.1" height="1.1" fill="#000"/>
<rect x="391.90" y="436.70" width="1.1" height="1.1" fill="#000"/>
<rect x="395.82" y="436.70" width="1.1" height="1.1" fill="#000"/>
<rect x="399.74" y="436.70" width="1.1" height="1.1" fill="#000"/>
<rect x="403.66" y="436.70" width="1.1" height="1.1" fill="#000"/>
<rect x="407.58" y="436.70" width="1.1" height="1.1" fill="#000"/>
<rect x="411.50" y="436.70" width="1.1" height="1.1" fill="#000"/>
<rect x="415.42" y="436.70" width="1.1" height="1.1" fill="#000"/>
<rect x="419.34" y="436.70" width="1.1" height="1.1" fill="#000"/>
<rect x="423.26" y="436.70" width="1.1" height="1.1" fill="#000"/>
<rect x="427.18" y="436.70" width="1.1" height="1.1" fill="#000"/>
<rect x="431.10" y="436.70" width="1.1" height="1.1" fill="#000"/>
<rect x="435.02" y="436.70" width="1.1" height="1.1" fill="#000"/>
<rect x="176.30" y="455.30" width="1.1" height="1.1" fill="#000"/>
<rect x="180.22" y="455.30" width="1.1" height="1.1" fill="#000"/>
<rect x="184.14" y="455.30" width="1.1" height="1.1" fill="#000"/>
<rect x="188.06" y="455.30" width="1.1" height="1.1" fill="#000"/>
<rect x="191.98" y="455.30" width="1.1" height="1.1" fill="#000"/>
<rect x="195.90" y="455.30" width="1.1" height="1.1" fill="#000"/>
<rect x="199.82" y="455.30" width="1.1" height="1.1" fill="#000"/>
<rect x="203.74" y="455.30" width="1.1" height="1.1" fill="#000"/>
<rect x="207.66" y="455.30" width="1.1" height="1.1" fill="#000"/>
<rect x="211.58" y="455.30" width="1.1" height="1.1" fill="#000"/>
<rect x="215.50" y="455.30" width="1.1" height="1.1" fill="#000"/>
<rect x="219.42" y="455.30" width="1.1" height="1.1" fill="#000"/>
<rect x="223.34" y="455.30" width="1.1" height="1.1" fill="#000"/>
<rect x="227.26" y="455.30" width="1.1" height="1.1" fill="#000"/>
<rect x="231.18" y="455.30" width="1.1" height="1.1" fill="#000"/>
<rect x="235.10" y="455.30" width="1.1" height="1.1" fill="#000"/>
<rect x="239.02" y="455.30" width="1.1" height="1.1" fill="#000"/>
<rect x="242.94" y="455.30" width="1.1" height="1.1" fill="#000"/>
<rect x="246.86" y="455.30" width="1.1" height="1.1" fill="#000"/>
<rect x="250.78" y="455.30" width="1.1" height="1.1" fill="#000"/>
<rect x="254.70" y="455.30" width="1.1" height="1.1" fill="#000"/>
<rect x="258.62" y="455.30" width="1.1" height="1.1" fill="#000"/>
<rect x="262.54" y="455.30" width="1.1" height="1.1" fill="#000"/>
<rect x="266.46" y="455.30" width="1.1" height="1.1" fill="#000"/>
<rect x="270.38" y="455.30" width="1.1" height="1.1" fill="#000"/>
<rect x="274.30" y="455.30" width="1.1" height="1.1" fill="#000"/>
<rect x="278.22" y="455.30" width="1.1" height="1.1" fill="#000"/>
<rect x="282.14" y="455.30" width="1.1" height="1.1" fill="#000"/>
<rect x="286.06" y="455.30" width="1.1" height="1.1" fill="#000"/>
<rect x="289.98" y="455.30" width="1.1" height="1.1" fill="#000"/>
<rect x="293.90" y="455.30" width="1.1" height="1.1" fill="#000"/>
<rect x="297.82" y="455.30" width="1.1" height="1.1" fill="#000"/>
<rect x="301.74" y="455.30" width="1.1" height="1.1" fill="#000"/>
<rect x="305.66" y="455.30" width="1.1" height="1.1" fill="#000"/>
<rect x="309.58" y="455.30" width="1.1" height="1.1" fill="#000"/>
<rect x="313.50" y="455.30" width="1.1" height="1.1" fill="#000"/>
<rect x="317.42" y="455.30" width="1.1" height="1.1" fill="#000"/>
<rect x="321.34" y="455.30" width="1.1" height="1.1" fill="#000"/>
<rect x="325.26" y="455.30" width="1.1" height="1.1" fill="#000"/>
<rect x="329.18" y="455.30" width="1.1" height="1.1" fill="#000"/>
<rect x="333.10" y="455.30" width="1.1" height="1.1" fill="#000"/>
<rect x="337.02" y="455.30" width="1.1" height="1.1" fill="#000"/>
<rect x="340.94" y="455.30" width="1.1" height="1.1" fill="#000"/>
<rect x="344.86" y="455.30" width="1.1" height="1.1" fill="#000"/>
<rect x="348.78" y="455.30" width="1.1" height="1.1" fill="#000"/>
<rect x="352.70" y="455.30" width="1.1" height="1.1" fill="#000"/>
<rect x="356.62" y="455.30" width="1.1" height="1.1" fill="#000"/>
<rect x="360.54" y="455.30" width="1.1" height="1.1" fill="#000"/>
<rect x="364.46" y="455.30" width="1.1" height="1.1" fill="#000"/>
<rect x="368.38" y="455.30" width="1.1" height="1.1" fill="#000"/>
<rect x="372.30" y="455.30" width="1.1" height="1.1" fill="#000"/>
<rect x="376.22" y="455.30" width="1.1" height="1.1" fill="#000"/>
<rect x="380.14" y="455.30" width="1.1" height="1.1" fill="#000"/>
<rect x="384.06" y="455.30" width="1.1" height="1.1" fill="#000"/>
<rect x="387.98" y="455.30" width="1.1" height="1.1" fill="#000"/>
<rect x="391.90" y="455.30" width="1.1" height="1.1" fill="#000"/>
<rect x="395.82" y="455.30" width="1.1" height="1.1" fill="#000"/>
<rect x="399.74" y="455.30" width="1.1" height="1.1" fill="#000"/>
<rect x="403.66" y="455.30" width="1.1" height="1.1" fill="#000"/>
<rect x="407.58" y="455.30" width="1.1" height="1.1" fill="#000"/>
<rect x="411.50" y="455.30" width="1.1" height="1.1" fill="#000"/>
<rect x="415.42" y="455.30" width="1.1" height="1.1" fill="#000"/>
<rect x="419.34" y="455.30" width="1.1" height="1.1" fill="#000"/>
<rect x="423.26" y="455.30" width="1.1" height="1.1" fill="#000"/>
<rect x="427.18" y="455.30" width="1.1" height="1.1" fill="#000"/>
<rect x="431.10" y="455.30" width="1.1" height="1.1" fill="#000"/>
<rect x="435.02" y="455.30" width="1.1" height="1.1" fill="#000"/>
<rect x="106.0" y="237.2" width="1.1" height="1.1" fill="#1010ff"/>
<rect x="106.0" y="249" width="1.1" height="1.1" fill="#1010ff"/>
<rect x="109.0" y="237.2" width="1.1" height="1.1" fill="#1010ff"/>
<rect x="109.0" y="249" width="1.1" height="1.1" fill="#1010ff"/>
<rect x="112.1" y="237.2" width="1.1" height="1.1" fill="#1010ff"/>
<rect x="112.1" y="249" width="1.1" height="1.1" fill="#1010ff"/>
<rect x="115.1" y="237.2" width="1.1" height="1.1" fill="#1010ff"/>
<rect x="115.1" y="249" width="1.1" height="1.1" fill="#1010ff"/>
<rect x="118.1" y="237.2" width="1.1" height="1.1" fill="#1010ff"/>
<rect x="118.1" y="249" width="1.1" height="1.1" fill="#1010ff"/>
<rect x="121.2" y="237.2" width="1.1" height="1.1" fill="#1010ff"/>
<rect x="121.2" y="249" width="1.1" height="1.1" fill="#1010ff"/>
<rect x="124.2" y="237.2" width="1.1" height="1.1" fill="#1010ff"/>
<rect x="124.2" y="249" width="1.1" height="1.1" fill="#1010ff"/>
<rect x="127.2" y="237.2" width="1.1" height="1.1" fill="#1010ff"/>
<rect x="127.2" y="249" width="1.1" height="1.1" fill="#1010ff"/>
<rect x="130.2" y="237.2" width="1.1" height="1.1" fill="#1010ff"/>
<rect x="130.2" y="249" width="1.1" height="1.1" fill="#1010ff"/>
<rect x="133.3" y="237.2" width="1.1" height="1.1" fill="#1010ff"/>
<rect x="133.3" y="249" width="1.1" height="1.1" fill="#1010ff"/>
<rect x="136.3" y="237.2" width="1.1" height="1.1" fill="#1010ff"/>
<rect x="136.3" y="249" width="1.1" height="1.1" fill="#1010ff"/>
<rect x="139.3" y="237.2" width="1.1" height="1.1" fill="#1010ff"/>
<rect x="139.3" y="249" width="1.1" height="1.1" fill="#1010ff"/>
<rect x="142.4" y="237.2" width="1.1" height="1.1" fill="#1010ff"/>
<rect x="142.4" y="249" width="1.1" height="1.1" fill="#1010ff"/>
<rect x="145.4" y="237.2" width="1.1" height="1.1" fill="#1010ff"/>
<rect x="145.4" y="249" width="1.1" height="1.1" fill="#1010ff"/>
<rect x="148.4" y="237.2" width="1.1" height="1.1" fill="#1010ff"/>
<rect x="148.4" y="249" width="1.1" height="1.1" fill="#1010ff"/>
<rect x="151.5" y="237.2" width="1.1" height="1.1" fill="#1010ff"/>
<rect x="151.5" y="249" width="1.1" height="1.1" fill="#1010ff"/>
<rect x="154.5" y="237.2" width="1.1" height="1.1" fill="#1010ff"/>
<rect x="154.5" y="249" width="1.1" height="1.1" fill="#1010ff"/>
<rect x="157.5" y="237.2" width="1.1" height="1.1" fill="#1010ff"/>
<rect x="157.5" y="249" width="1.1" height="1.1" fill="#1010ff"/>
<rect x="160.5" y="237.2" width="1.1" height="1.1" fill="#1010ff"/>
<rect x="160.5" y="249" width="1.1" height="1.1" fill="#1010ff"/>
<rect x="163.6" y="237.2" width="1.1" height="1.1" fill="#1010ff"/>
<rect x="163.6" y="249" width="1.1" height="1.1" fill="#1010ff"/>
<rect x="166.6" y="237.2" width="1.1" height="1.1" fill="#1010ff"/>
<rect x="166.6" y="249" width="1.1" height="1.1" fill="#1010ff"/>
<rect x="169.6" y="237.2" width="1.1" height="1.1" fill="#1010ff"/>
<rect x="169.6" y="249" width="1.1" height="1.1" fill="#1010ff"/>
<rect x="172.7" y="237.2" width="1.1" height="1.1" fill="#1010ff"/>
<rect x="172.7" y="249" width="1.1" height="1.1" fill="#1010ff"/>
<rect x="175.7" y="237.2" width="1.1" height="1.1" fill="#1010ff"/>
<rect x="175.7" y="249" width="1.1" height="1.1" fill="#1010ff"/>
<rect x="178.7" y="237.2" width="1.1" height="1.1" fill="#1010ff"/>
<rect x="178.7" y="249" width="1.1" height="1.1" fill="#1010ff"/>
<rect x="181.8" y="237.2" width="1.1" height="1.1" fill="#1010ff"/>
<rect x="181.8" y="249" width="1.1" height="1.1" fill="#1010ff"/>
<rect x="184.8" y="237.2" width="1.1" height="1.1" fill="#1010ff"/>
<rect x="184.8" y="249" width="1.1" height="1.1" fill="#1010ff"/>
<rect x="187.8" y="237.2" width="1.1" height="1.1" fill="#1010ff"/>
<rect x="187.8" y="249" width="1.1" height="1.1" fill="#1010ff"/>
<rect x="190.8" y="237.2" width="1.1" height="1.1" fill="#1010ff"/>
<rect x="190.8" y="249" width="1.1" height="1.1" fill="#1010ff"/>
<rect x="193.9" y="237.2" width="1.1" height="1.1" fill="#1010ff"/>
<rect x="193.9" y="249" width="1.1" height="1.1" fill="#1010ff"/>
<rect x="196.9" y="237.2" width="1.1" height="1.1" fill="#1010ff"/>
<rect x="196.9" y="249" width="1.1" height="1.1" fill="#1010ff"/>
<rect x="199.9" y="237.2" width="1.1" height="1.1" fill="#1010ff"/>
<rect x="199.9" y="249" width="1.1" height="1.1" fill="#1010ff"/>
<rect x="203.0" y="237.2" width="1.1" height="1.1" fill="#1010ff"/>
<rect x="203.0" y="249" width="1.1" height="1.1" fill="#1010ff"/>
<rect x="206.0" y="237.2" width="1.1" height="1.1" fill="#1010ff"/>
<rect x="206.0" y="249" width="1.1" height="1.1" fill="#1010ff"/>
<rect x="209.0" y="237.2" width="1.1" height="1.1" fill="#1010ff"/>
<rect x="209.0" y="249" width="1.1" height="1.1" fill="#1010ff"/>
<rect x="212.1" y="237.2" width="1.1" height="1.1" fill="#1010ff"/>
<rect x="212.1" y="249" width="1.1" height="1.1" fill="#1010ff"/>
<rect x="215.1" y="237.2" width="1.1" height="1.1" fill="#1010ff"/>
<rect x="215.1" y="249" width="1.1" height="1.1" fill="#1010ff"/>
<rect x="218.1" y="237.2" width="1.1" height="1.1" fill="#1010ff"/>
<rect x="218.1" y="249" width="1.1" height="1.1" fill="#1010ff"/>
<rect x="221.1" y="237.2" width="1.1" height="1.1" fill="#1010ff"/>
<rect x="221.1" y="249" width="1.1" height="1.1" fill="#1010ff"/>
<rect x="224.2" y="237.2" width="1.1" height="1.1" fill="#1010ff"/>
<rect x="224.2" y="249" width="1.1" height="1.1" fill="#1010ff"/>
<rect x="227.2" y="237.2" width="1.1" height="1.1" fill="#1010ff"/>
<rect x="227.2" y="249" width="1.1" height="1.1" fill="#1010ff"/>
<rect x="230.2" y="237.2" width="1.1" height="1.1" fill="#1010ff"/>
<rect x="230.2" y="249" width="1.1" height="1.1" fill="#1010ff"/>
<rect x="233.3" y="237.2" width="1.1" height="1.1" fill="#1010ff"/>
<rect x="233.3" y="249" width="1.1" height="1.1" fill="#1010ff"/>
<rect x="236.3" y="237.2" width="1.1" height="1.1" fill="#1010ff"/>
<rect x="236.3" y="249" width="1.1" height="1.1" fill="#1010ff"/>
<rect x="239.3" y="237.2" width="1.1" height="1.1" fill="#1010ff"/>
<rect x="239.3" y="249" width="1.1" height="1.1" fill="#1010ff"/>
<rect x="242.4" y="237.2" width="1.1" height="1.1" fill="#1010ff"/>
<rect x="242.4" y="249" width="1.1" height="1.1" fill="#1010ff"/>
<rect x="245.4" y="237.2" width="1.1" height="1.1" fill="#1010ff"/>
<rect x="245.4" y="249" width="1.1" height="1.1" fill="#1010ff"/>
<rect x="248.4" y="237.2" width="1.1" height="1.1" fill="#1010ff"/>
<rect x="248.4" y="249" width="1.1" height="1.1" fill="#1010ff"/>
<rect x="251.4" y="237.2" width="1.1" height="1.1" fill="#1010ff"/>
<rect x="251.4" y="249" width="1.1" height="1.1" fill="#1010ff"/>
<rect x="254.5" y="237.2" width="1.1" height="1.1" fill="#1010ff"/>
<rect x="254.5" y="249" width="1.1" height="1.1" fill="#1010ff"/>
<rect x="257.5" y="237.2" width="1.1" height="1.1" fill="#1010ff"/>
<rect x="257.5" y="249" width="1.1" height="1.1" fill="#1010ff"/>
<rect x="260.5" y="237.2" width="1.1" height="1.1" fill="#1010ff"/>
<rect x="260.5" y="249" width="1.1" height="1.1" fill="#1010ff"/>
<rect x="263.6" y="237.2" width="1.1" height="1.1" fill="#1010ff"/>
<rect x="263.6" y="249" width="1.1" height="1.1" fill="#1010ff"/>
<rect x="266.6" y="237.2" width="1.1" height="1.1" fill="#1010ff"/>
<rect x="266.6" y="249" width="1.1" height="1.1" fill="#1010ff"/>
<rect x="269.6" y="237.2" width="1.1" height="1.1" fill="#1010ff"/>
<rect x="269.6" y="249" width="1.1" height="1.1" fill="#1010ff"/>
<rect x="272.6" y="237.2" width="1.1" height="1.1" fill="#1010ff"/>
<rect x="272.6" y="249" width="1.1" height="1.1" fill="#1010ff"/>
<rect x="275.7" y="237.2" width="1.1" height="1.1" fill="#1010ff"/>
<rect x="275.7" y="249" width="1.1" height="1.1" fill="#1010ff"/>
<rect x="278.7" y="237.2" width="1.1" height="1.1" fill="#1010ff"/>
<rect x="278.7" y="249" width="1.1" height="1.1" fill="#1010ff"/>
<rect x="281.7" y="237.2" width="1.1" height="1.1" fill="#1010ff"/>
<rect x="281.7" y="249" width="1.1" height="1.1" fill="#1010ff"/>
<rect x="284.8" y="237.2" width="1.1" height="1.1" fill="#1010ff"/>
<rect x="284.8" y="249" width="1.1" height="1.1" fill="#1010ff"/>
<rect x="287.8" y="237.2" width="1.1" height="1.1" fill="#1010ff"/>
<rect x="287.8" y="249" width="1.1" height="1.1" fill="#1010ff"/>
<rect x="290.8" y="237.2" width="1.1" height="1.1" fill="#1010ff"/>
<rect x="290.8" y="249" width="1.1" height="1.1" fill="#1010ff"/>
<rect x="293.9" y="237.2" width="1.1" height="1.1" fill="#1010ff"/>
<rect x="293.9" y="249" width="1.1" height="1.1" fill="#1010ff"/>
<rect x="296.9" y="237.2" width="1.1" height="1.1" fill="#1010ff"/>
<rect x="296.9" y="249" width="1.1" height="1.1" fill="#1010ff"/>
<rect x="299.9" y="237.2" width="1.1" height="1.1" fill="#1010ff"/>
<rect x="299.9" y="249" width="1.1" height="1.1" fill="#1010ff"/>
<rect x="302.9" y="237.2" width="1.1" height="1.1" fill="#1010ff"/>
<rect x="302.9" y="249" width="1.1" height="1.1" fill="#1010ff"/>
<rect x="306.0" y="237.2" width="1.1" height="1.1" fill="#1010ff"/>
<rect x="306.0" y="249" width="1.1" height="1.1" fill="#1010ff"/>
<rect x="99.8" y="235.3" width="5" height="5" fill="#fff" stroke="#0000ff" stroke-width="1.5"/><rect x="101.8" y="237.3" width="1" height="1" fill="#555"/>
<rect x="99.8" y="240.9" width="5" height="5" fill="#fff" stroke="#0000ff" stroke-width="1.5"/><rect x="101.8" y="242.9" width="1" height="1" fill="#555"/>
<rect x="99.8" y="246.5" width="5" height="5" fill="#fff" stroke="#0000ff" stroke-width="1.5"/><rect x="101.8" y="248.5" width="1" height="1" fill="#555"/>
<rect x="306.8" y="235.3" width="5" height="5" fill="#fff" stroke="#0000ff" stroke-width="1.5"/><rect x="308.8" y="237.3" width="1" height="1" fill="#555"/>
<rect x="306.8" y="240.9" width="5" height="5" fill="#fff" stroke="#0000ff" stroke-width="1.5"/><rect x="308.8" y="242.9" width="1" height="1" fill="#555"/>
<rect x="306.8" y="246.5" width="5" height="5" fill="#fff" stroke="#0000ff" stroke-width="1.5"/><rect x="308.8" y="248.5" width="1" height="1" fill="#555"/>
<rect x="202.6" y="235.3" width="5" height="5" fill="#fff" stroke="#0000ff" stroke-width="1.5"/><rect x="204.6" y="237.3" width="1" height="1" fill="#555"/>
<rect x="202.6" y="246.5" width="5" height="5" fill="#fff" stroke="#0000ff" stroke-width="1.5"/><rect x="204.6" y="248.5" width="1" height="1" fill="#555"/>
<rect x="527" y="165" width="215" height="308" fill="#353535"/>
<rect x="527.5" y="165.5" width="182" height="306.3" fill="#444444" stroke="#2c2c2c"/>
<rect x="528.5" y="166.5" width="180" height="304.3" fill="none" stroke="#4c4c4c"/>
<rect x="531" y="169" width="176.8" height="19.8" fill="#383838"/>
<rect x="531" y="195" width="177" height="273.5" fill="#363636"/>
<rect x="531" y="195" width="177" height="1" fill="#2a2a2a"/><rect x="531" y="195" width="1" height="273.5" fill="#2a2a2a"/>
<rect x="693.5" y="196" width="14.5" height="272.5" fill="#3a3a3a"/>
<rect x="694" y="196.1" width="13" height="12.8" fill="#505050" stroke="#5c5c5c" stroke-width="0.8"/>
<path d="M697 205L700.5 201.7L704 205" fill="none" stroke="#d0d0d0" stroke-width="2"/>
<rect x="694" y="210.3" width="13" height="121" fill="#5a5a5a" stroke="#626262" stroke-width="0.8"/>
<rect x="694" y="455" width="13" height="13" fill="#505050" stroke="#5c5c5c" stroke-width="0.8"/>
<path d="M697 459.3L700.5 462.6L704 459.3" fill="none" stroke="#d0d0d0" stroke-width="2"/>
<rect x="531" y="468.5" width="178" height="3" fill="#444444"/>
<rect x="527.5" y="471.3" width="183" height="1.5" fill="#2c2c2c"/>
<path d="M709 166H733.2Q736.2 166 736.2 169V210.7Q736.2 213.7 733.2 213.7H709Z" fill="url(#vt)"/>
<path d="M709 165.5H733.2Q736.7 165.5 736.7 169V210.7Q736.7 214.2 733.2 214.2H711" fill="none" stroke="#2c2c2c" stroke-width="1"/>
<path d="M717 182.3H733M717 193.3H728.5" stroke="#f2f2f2" stroke-width="1.1"/><circle cx="725.4" cy="182.3" r="2.3" fill="#f2f2f2"/><circle cx="730.5" cy="193.3" r="2" fill="#555" stroke="#f2f2f2" stroke-width="1.1"/>
<rect x="711.5" y="214.5" width="27.7" height="258" fill="#3a3a3a" stroke="#2e2e2e"/>
<rect x="712.5" y="215" width="1" height="257" fill="#4a4a4a"/>
<rect x="739" y="496" width="2" height="2" fill="#666"/>
<rect x="736" y="499" width="2" height="2" fill="#666"/>
<rect x="739" y="499" width="2" height="2" fill="#666"/>
<rect x="733" y="502" width="2" height="2" fill="#666"/>
<rect x="736" y="502" width="2" height="2" fill="#666"/>
<rect x="739" y="502" width="2" height="2" fill="#666"/>
</svg>
<div class="a" style="left:14px;top:142px;font-size:12px;color:#f0f0f0">*未命名</div>
<div class="a" style="left:104.5px;top:142.2px;width:80px;height:14px;font-family:'Liberation Serif',serif;font-size:12px;color:#f4f4f4"><span style="position:absolute;left:0.00px;width:6px;text-align:center">*</span><span style="position:absolute;left:6.05px;width:6px;text-align:center">2</span><span style="position:absolute;left:12.10px;width:6px;text-align:center">0</span><span style="position:absolute;left:18.15px;width:6px;text-align:center">2</span><span style="position:absolute;left:24.20px;width:6px;text-align:center">0</span><span style="position:absolute;left:30.25px;width:6px;text-align:center">_</span><span style="position:absolute;left:36.30px;width:6px;text-align:center;transform:scaleX(0.85)">P</span><span style="position:absolute;left:42.35px;width:6px;text-align:center;transform:scaleX(0.75)">D</span><span style="position:absolute;left:48.40px;width:6px;text-align:center">F</span><span style="position:absolute;left:54.45px;width:6px;text-align:center">.</span><span style="position:absolute;left:60.50px;width:6px;text-align:center">p</span><span style="position:absolute;left:66.55px;width:6px;text-align:center">d</span><span style="position:absolute;left:72.60px;width:6px;text-align:center">f</span></div>
<div class="a" style="left:56px;top:166px;width:434px;height:306px;overflow:hidden"><div class="a" style="left:-56px;top:-166px;width:743px;height:508px"><div class="a" style="left:102.3px;top:159.60px;font-family:'Liberation Serif',serif;font-weight:bold;font-size:8.6px;line-height:12px;color:#111">2</div><div class="a" style="left:110.5px;top:159.60px;font-family:'Liberation Serif',serif;font-weight:bold;font-size:7.55px;letter-spacing:-0.45px;line-height:12px;color:#333">综合政务</div><div class="a" style="left:439.00px;top:159.60px;font-family:'Liberation Serif',serif;font-weight:bold;font-size:8.6px;line-height:12px;color:#111">3</div><div class="a" style="left:102.3px;top:179.50px;font-family:'Liberation Serif',serif;font-weight:bold;font-size:8.6px;line-height:12px;color:#111">3</div><div class="a" style="left:110.5px;top:179.50px;font-family:'Liberation Serif',serif;font-weight:bold;font-size:7.55px;letter-spacing:-0.45px;line-height:12px;color:#333">国民经济管理、国有资产监管</div><div class="a" style="left:439.00px;top:179.50px;font-family:'Liberation Serif',serif;font-weight:bold;font-size:8.6px;line-height:12px;color:#111">5</div><div class="a" style="left:102.3px;top:198.60px;font-family:'Liberation Serif',serif;font-weight:bold;font-size:8.6px;line-height:12px;color:#111">4</div><div class="a" style="left:110.5px;top:198.60px;font-family:'Liberation Serif',serif;font-weight:bold;font-size:7.55px;letter-spacing:-0.45px;line-height:12px;color:#333">财政、金融、审计</div><div class="a" style="left:439.00px;top:198.60px;font-family:'Liberation Serif',serif;font-weight:bold;font-size:8.6px;line-height:12px;color:#111">7</div><div class="a" style="left:102.3px;top:218.40px;font-family:'Liberation Serif',serif;font-weight:bold;font-size:8.6px;line-height:12px;color:#111">5</div><div class="a" style="left:110.5px;top:218.40px;font-family:'Liberation Serif',serif;font-weight:bold;font-size:7.55px;letter-spacing:-0.45px;line-height:12px;color:#333">国土资源、能源</div><div class="a" style="left:439.00px;top:218.40px;font-family:'Liberation Serif',serif;font-weight:bold;font-size:8.6px;line-height:12px;color:#111">9</div><div class="a" style="left:102.3px;top:237.60px;font-family:'Liberation Serif',serif;font-weight:bold;font-size:8.6px;line-height:12px;color:#ff0000">6</div><div class="a" style="left:110.5px;top:237.60px;font-family:'Liberation Serif',serif;font-weight:bold;font-size:7.55px;letter-spacing:-0.45px;line-height:12px;color:#ff0000">农业、林业、水利</div><div class="a" style="left:297.6px;top:237.30px;font-size:9px;font-weight:bold;letter-spacing:-0.3px;line-height:12px;color:#ff0000">10</div><div class="a" style="left:102.3px;top:255.80px;font-family:'Liberation Serif',serif;font-weight:bold;font-size:8.6px;line-height:12px;color:#111">7</div><div class="a" style="left:110.5px;top:255.80px;font-family:'Liberation Serif',serif;font-weight:bold;font-size:7.55px;letter-spacing:-0.45px;line-height:12px;color:#333">工业、交通</div><div class="a" style="left:436.00px;top:255.80px;font-family:'Liberation Serif',serif;font-weight:bold;font-size:8.6px;line-height:12px;color:#111">12</div><div class="a" style="left:102.3px;top:275.20px;font-family:'Liberation Serif',serif;font-weight:bold;font-size:8.6px;line-height:12px;color:#111">8</div><div class="a" style="left:110.5px;top:275.20px;font-family:'Liberation Serif',serif;font-weight:bold;font-size:7.55px;letter-spacing:-0.45px;line-height:12px;color:#333">商贸、海关、旅游</div><div class="a" style="left:436.00px;top:275.20px;font-family:'Liberation Serif',serif;font-weight:bold;font-size:8.6px;line-height:12px;color:#111">13</div><div class="a" style="left:102.3px;top:294.30px;font-family:'Liberation Serif',serif;font-weight:bold;font-size:8.6px;line-height:12px;color:#111">9</div><div class="a" style="left:110.5px;top:294.30px;font-family:'Liberation Serif',serif;font-weight:bold;font-size:7.55px;letter-spacing:-0.45px;line-height:12px;color:#333">市场监管、安全生产监管</div><div class="a" style="left:436.00px;top:294.30px;font-family:'Liberation Serif',serif;font-weight:bold;font-size:8.6px;line-height:12px;color:#111">15</div><div class="a" style="left:102.3px;top:313.70px;font-family:'Liberation Serif',serif;font-weight:bold;font-size:8.6px;line-height:12px;color:#111">10</div><div class="a" style="left:114.3px;top:313.70px;font-family:'Liberation Serif',serif;font-weight:bold;font-size:7.55px;letter-spacing:-0.45px;line-height:12px;color:#333">城乡建设、环境保护</div><div class="a" style="left:436.00px;top:313.70px;font-family:'Liberation Serif',serif;font-weight:bold;font-size:8.6px;line-height:12px;color:#111">16</div><div class="a" style="left:102.3px;top:333.30px;font-family:'Liberation Serif',serif;font-weight:bold;font-size:8.6px;line-height:12px;color:#111">11</div><div class="a" style="left:114.3px;top:333.30px;font-family:'Liberation Serif',serif;font-weight:bold;font-size:7.55px;letter-spacing:-0.45px;line-height:12px;color:#333">科技、教育</div><div class="a" style="left:436.00px;top:333.30px;font-family:'Liberation Serif',serif;font-weight:bold;font-size:8.6px;line-height:12px;color:#111">17</div><div class="a" style="left:102.3px;top:352.70px;font-family:'Liberation Serif',serif;font-weight:bold;font-size:8.6px;line-height:12px;color:#111">12</div><div class="a" style="left:114.3px;top:352.70px;font-family:'Liberation Serif',serif;font-weight:bold;font-size:7.55px;letter-spacing:-0.45px;line-height:12px;color:#333">文化、广电、新闻出版</div><div class="a" style="left:436.00px;top:352.70px;font-family:'Liberation Serif',serif;font-weight:bold;font-size:8.6px;line-height:12px;color:#111">19</div><div class="a" style="left:102.3px;top:371.00px;font-family:'Liberation Serif',serif;font-weight:bold;font-size:8.6px;line-height:12px;color:#111">13</div><div class="a" style="left:114.3px;top:371.00px;font-family:'Liberation Serif',serif;font-weight:bold;font-size:7.55px;letter-spacing:-0.45px;line-height:12px;color:#333">卫生、体育</div><div class="a" style="left:436.00px;top:371.00px;font-family:'Liberation Serif',serif;font-weight:bold;font-size:8.6px;line-height:12px;color:#111">20</div><div class="a" style="left:102.3px;top:390.20px;font-family:'Liberation Serif',serif;font-weight:bold;font-size:8.6px;line-height:12px;color:#111">14</div><div class="a" style="left:114.3px;top:390.20px;font-family:'Liberation Serif',serif;font-weight:bold;font-size:7.55px;letter-spacing:-0.45px;line-height:12px;color:#333">人口与计划生育、妇女儿童工作</div><div class="a" style="left:436.00px;top:390.20px;font-family:'Liberation Serif',serif;font-weight:bold;font-size:8.6px;line-height:12px;color:#111">24</div><div class="a" style="left:102.3px;top:409.00px;font-family:'Liberation Serif',serif;font-weight:bold;font-size:8.6px;line-height:12px;color:#111">15</div><div class="a" style="left:114.3px;top:409.00px;font-family:'Liberation Serif',serif;font-weight:bold;font-size:7.55px;letter-spacing:-0.45px;line-height:12px;color:#333">劳动、人事、监察</div><div class="a" style="left:436.00px;top:409.00px;font-family:'Liberation Serif',serif;font-weight:bold;font-size:8.6px;line-height:12px;color:#111">25</div><div class="a" style="left:102.3px;top:428.20px;font-family:'Liberation Serif',serif;font-weight:bold;font-size:8.6px;line-height:12px;color:#111">16</div><div class="a" style="left:114.3px;top:428.20px;font-family:'Liberation Serif',serif;font-weight:bold;font-size:7.55px;letter-spacing:-0.45px;line-height:12px;color:#333">公安、安全、司法</div><div class="a" style="left:436.00px;top:428.20px;font-family:'Liberation Serif',serif;font-weight:bold;font-size:8.6px;line-height:12px;color:#111">26</div><div class="a" style="left:102.3px;top:446.80px;font-family:'Liberation Serif',serif;font-weight:bold;font-size:8.6px;line-height:12px;color:#111">17</div><div class="a" style="left:114.3px;top:446.80px;font-family:'Liberation Serif',serif;font-weight:bold;font-size:7.55px;letter-spacing:-0.45px;line-height:12px;color:#333">民政、扶贫、救灾</div><div class="a" style="left:436.00px;top:446.80px;font-family:'Liberation Serif',serif;font-weight:bold;font-size:8.6px;line-height:12px;color:#111">27</div><div class="a" style="left:102.3px;top:466.00px;font-family:'Liberation Serif',serif;font-weight:bold;font-size:8.6px;line-height:12px;color:#111">18</div><div class="a" style="left:114.3px;top:466.00px;font-family:'Liberation Serif',serif;font-weight:bold;font-size:7.55px;letter-spacing:-0.45px;line-height:12px;color:#333">民族、宗教</div><div class="a" style="left:436.00px;top:466.00px;font-family:'Liberation Serif',serif;font-weight:bold;font-size:8.6px;line-height:12px;color:#111">28</div></div></div>
<div class="a" style="left:605.5px;top:171px;font-size:13px;font-weight:bold;color:#f4f4f4">文字</div>
<div class="a" style="left:532px;top:196px;width:161.5px;height:272.5px;overflow:hidden"><div class="a" style="left:-532px;top:-196px;width:743px;height:508px"><svg class="a" style="left:0;top:0" width="743" height="508"><defs><linearGradient id="cb2" x1="0" y1="0" x2="0" y2="1"><stop offset="0" stop-color="#4a4a4a"/><stop offset="1" stop-color="#3c3c3c"/></linearGradient></defs><path d="M539.4 205.2H547.3L543.35 209.2Z" fill="#aaa"/><path d="M539.5 233.5H547L543.25 230.3Z" fill="#aaa"/><rect x="542.5" y="269.5" width="160" height="210" fill="none" stroke="#404040"/><rect x="586" y="280" width="120" height="21.6" rx="2" fill="#262626"/><rect x="663.5" y="309.4" width="45" height="19.2" rx="2" fill="#262626"/><rect x="554.5" y="354" width="160" height="130" fill="none" stroke="#404040"/><rect x="620.5" y="365.5" width="90" height="20" rx="2.5" fill="url(#cb2)" stroke="#555"/><rect x="668" y="394" width="40" height="22.4" rx="2.5" fill="#4a4a4a" stroke="#5a5a5a"/><rect x="675.5" y="399.6" width="11.1" height="11.4" fill="#ff0000"/><rect x="691.5" y="399" width="1.5" height="1.5" fill="#eee"/><rect x="691.5" y="403" width="1.5" height="1.5" fill="#eee"/><rect x="691.5" y="407" width="1.5" height="1.5" fill="#eee"/><rect x="668" y="424" width="40" height="21.5" rx="2.5" fill="#5a5a5a" stroke="#666"/><rect x="676" y="430" width="11" height="11" fill="#3a3a3a" stroke="#777" stroke-width="0.8"/><rect x="667" y="454.5" width="40" height="20" fill="#262626"/></svg><div class="a" style="left:552.5px;top:200px;font-size:12px;color:#f0f0f0">几何</div><div class="a" style="left:552.5px;top:223.5px;font-size:12px;color:#f0f0f0">字体</div><div class="a" style="left:552.5px;top:284px;font-size:12px;color:#f0f0f0">字体</div><div class="a" style="left:588.8px;top:283.6px;width:95px;height:14px;font-family:'Liberation Serif',serif;font-size:11.5px;color:#f0f0f0"><span style="position:absolute;left:0.00px;width:6px;text-align:center;transform:scaleX(0.62)">M</span><span style="position:absolute;left:6.00px;width:6px;text-align:center">i</span><span style="position:absolute;left:12.00px;width:6px;text-align:center">c</span><span style="position:absolute;left:18.00px;width:6px;text-align:center">r</span><span style="position:absolute;left:24.00px;width:6px;text-align:center">o</span><span style="position:absolute;left:30.00px;width:6px;text-align:center">s</span><span style="position:absolute;left:36.00px;width:6px;text-align:center">o</span><span style="position:absolute;left:42.00px;width:6px;text-align:center">f</span><span style="position:absolute;left:48.00px;width:6px;text-align:center">t</span><span style="position:absolute;left:60.00px;width:6px;text-align:center">Y</span><span style="position:absolute;left:66.00px;width:6px;text-align:center">a</span><span style="position:absolute;left:72.00px;width:6px;text-align:center;transform:scaleX(0.7)">H</span><span style="position:absolute;left:78.00px;width:6px;text-align:center">e</span><span style="position:absolute;left:84.00px;width:6px;text-align:center">i</span></div><div class="a" style="left:631.5px;top:311.5px;font-size:12px;color:#f0f0f0">大小</div><div class="a" style="left:668.6px;top:313.5px;font-family:'Liberation Mono',monospace;font-size:10.5px;color:#f0f0f0;transform:scaleY(1.15);transform-origin:0 0">10.5</div><div class="a" style="left:565px;top:368.5px;font-size:12px;color:#f0f0f0">类型</div><div class="a" style="left:623.5px;top:367.5px;font-size:12px;color:#f0f0f0">填充文本</div><div class="a" style="left:565px;top:391.5px;font-size:12px;color:#f0f0f0">填充色</div><div class="a" style="left:565px;top:421.5px;font-size:12px;color:#f0f0f0">描边色</div><div class="a" style="left:565px;top:457px;font-size:12px;color:#f0f0f0">线宽</div><div class="a" style="left:673px;top:455.5px;font-family:'Liberation Serif',serif;font-size:11px;color:#777">1</div></div></div>
<div class="a" style="left:3px;top:484.5px;font-size:12.3px;letter-spacing:0.21px;color:#f0f0f0">页面 2/34 | 宽度: 595点 高度: 842点 对象: 26</div>
</body></html>
